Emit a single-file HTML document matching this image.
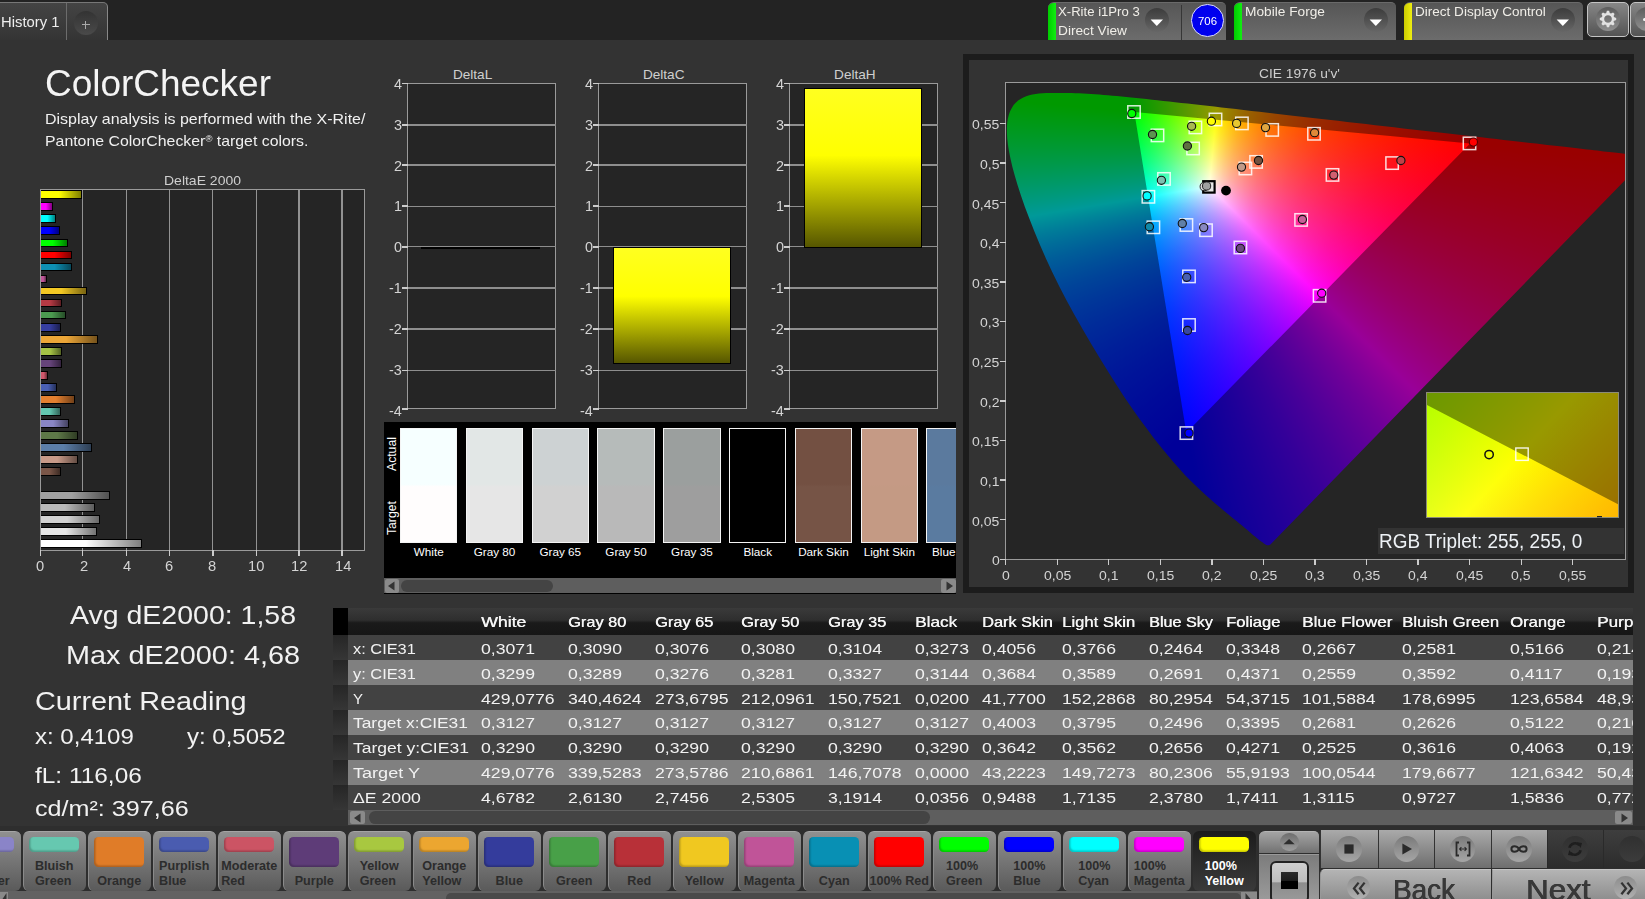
<!DOCTYPE html>
<html><head><meta charset="utf-8"><title>ColorChecker</title>
<style>
html,body{margin:0;padding:0;background:#333;}
body{width:1645px;height:899px;position:relative;overflow:hidden;font-family:"Liberation Sans",sans-serif;}
div{box-sizing:border-box;}
</style></head><body>
<div style="position:absolute;left:0.00px;top:0.00px;width:1645.00px;height:40.00px;background:#232323;"></div>
<div style="position:absolute;left:0.00px;top:2.00px;width:108.00px;height:38.00px;background:linear-gradient(#444,#343434);border-top:1px solid #777;border-right:1px solid #888;border-top-right-radius:5px;"></div>
<div style="position:absolute;left:66.00px;top:3.00px;width:1.00px;height:37.00px;background:#6c6c6c;"></div>
<div style="position:absolute;left:0.60px;top:14.00px;font-size:13.90px;line-height:16px;color:#eee;white-space:nowrap;transform:scaleX(1.0668);transform-origin:0 0;">History 1</div>
<div style="position:absolute;left:73.50px;top:10.70px;width:24.00px;height:24.00px;border-radius:50%;background:linear-gradient(#333,#4a4a4a);"></div>
<div style="position:absolute;left:81.70px;top:24.20px;width:8.00px;height:1.00px;background:#aaa;"></div>
<div style="position:absolute;left:85.20px;top:20.70px;width:1.00px;height:8.00px;background:#aaa;"></div>
<div style="position:absolute;left:1047.50px;top:2.00px;width:178.50px;height:37.50px;background:linear-gradient(#565656,#6c6c6c);border-top:1px solid #6a6a6a;border-radius:6px 5px 0 0;overflow:hidden;"><div style="position:absolute;left:0;top:-1px;width:8px;height:39px;background:linear-gradient(90deg,#0c0,#1e1)"></div></div>
<div style="position:absolute;left:1145.20px;top:8.40px;width:24.00px;height:24.00px;border-radius:50%;background:linear-gradient(#3c3c3c,#666);"></div>
<svg style="position:absolute;left:1150.4px;top:18.8px" width="14" height="8"><path d="M0.6 0.6H13L6.8 7z" fill="#fff"/></svg>
<div style="position:absolute;left:1058.30px;top:4.00px;font-size:13.20px;line-height:15px;color:#f0eee8;white-space:nowrap;transform:scaleX(0.9956);transform-origin:0 0;">X-Rite i1Pro 3</div>
<div style="position:absolute;left:1058.30px;top:23.00px;font-size:13.20px;line-height:15px;color:#f0eee8;white-space:nowrap;transform:scaleX(1.0375);transform-origin:0 0;">Direct View</div>
<div style="position:absolute;left:1181.00px;top:5.00px;width:1.30px;height:34.50px;background:#363636;"></div>
<div style="position:absolute;left:1191.00px;top:4.20px;width:32.60px;height:32.60px;border-radius:50%;background:#0000ee;border:1.5px solid #dcdcff;"></div>
<div style="position:absolute;left:1197.90px;top:14.00px;font-size:11.80px;line-height:14px;color:#fff;white-space:nowrap;transform:scaleX(0.9652);transform-origin:0 0;">706</div>
<div style="position:absolute;left:1234.00px;top:2.00px;width:162.00px;height:37.50px;background:linear-gradient(#565656,#6c6c6c);border-top:1px solid #6a6a6a;border-radius:6px 5px 0 0;overflow:hidden;"><div style="position:absolute;left:0;top:-1px;width:8px;height:39px;background:linear-gradient(90deg,#0c0,#1e1)"></div></div>
<div style="position:absolute;left:1363.80px;top:8.40px;width:24.00px;height:24.00px;border-radius:50%;background:linear-gradient(#3c3c3c,#666);"></div>
<svg style="position:absolute;left:1369.0px;top:18.8px" width="14" height="8"><path d="M0.6 0.6H13L6.8 7z" fill="#fff"/></svg>
<div style="position:absolute;left:1244.80px;top:4.00px;font-size:13.20px;line-height:15px;color:#f0eee8;white-space:nowrap;transform:scaleX(1.0386);transform-origin:0 0;">Mobile Forge</div>
<div style="position:absolute;left:1404.40px;top:2.00px;width:178.60px;height:37.50px;background:linear-gradient(#565656,#6c6c6c);border-top:1px solid #6a6a6a;border-radius:6px 5px 0 0;overflow:hidden;"><div style="position:absolute;left:0;top:-1px;width:8px;height:39px;background:linear-gradient(90deg,#cc0,#ee1)"></div></div>
<div style="position:absolute;left:1551.00px;top:8.40px;width:24.00px;height:24.00px;border-radius:50%;background:linear-gradient(#3c3c3c,#666);"></div>
<svg style="position:absolute;left:1556.2px;top:18.8px" width="14" height="8"><path d="M0.6 0.6H13L6.8 7z" fill="#fff"/></svg>
<div style="position:absolute;left:1415.20px;top:4.00px;font-size:13.20px;line-height:15px;color:#f0eee8;white-space:nowrap;transform:scaleX(1.0264);transform-origin:0 0;">Direct Display Control</div>
<div style="position:absolute;left:1587.00px;top:1.80px;width:42.20px;height:35.20px;border:1.3px solid #c4c4c4;border-radius:5px;background:linear-gradient(#868686,#545454);"></div>
<div style="position:absolute;left:1595.90px;top:7.30px;width:24.20px;height:24.20px;border-radius:50%;background:linear-gradient(#5c5c5c,#909090);"></div>
<svg style="position:absolute;left:1598px;top:9.4px" width="20" height="20" viewBox="-10 -10 20 20"><g fill="#e2e2e2"><path d="M-1.9 -5.6L-1.1 -8.2H1.1L1.9 -5.6z" transform="rotate(0)"/><path d="M-1.9 -5.6L-1.1 -8.2H1.1L1.9 -5.6z" transform="rotate(45)"/><path d="M-1.9 -5.6L-1.1 -8.2H1.1L1.9 -5.6z" transform="rotate(90)"/><path d="M-1.9 -5.6L-1.1 -8.2H1.1L1.9 -5.6z" transform="rotate(135)"/><path d="M-1.9 -5.6L-1.1 -8.2H1.1L1.9 -5.6z" transform="rotate(180)"/><path d="M-1.9 -5.6L-1.1 -8.2H1.1L1.9 -5.6z" transform="rotate(225)"/><path d="M-1.9 -5.6L-1.1 -8.2H1.1L1.9 -5.6z" transform="rotate(270)"/><path d="M-1.9 -5.6L-1.1 -8.2H1.1L1.9 -5.6z" transform="rotate(315)"/></g><circle r="5.05" fill="none" stroke="#e2e2e2" stroke-width="2.4"/></svg>
<div style="position:absolute;left:1630.20px;top:1.80px;width:30.00px;height:35.20px;border:1.3px solid #c4c4c4;border-radius:5px;background:linear-gradient(#868686,#545454);"></div>
<div style="position:absolute;left:1634.50px;top:7.30px;width:24.20px;height:24.20px;border-radius:50%;background:linear-gradient(#5c5c5c,#909090);"></div>
<div style="position:absolute;left:1643.00px;top:17.50px;width:3.00px;height:3.60px;background:#f4f4f4;border-radius:1.5px 0 0 1.5px;"></div>
<div style="position:absolute;left:44.90px;top:63.00px;font-size:36.20px;line-height:41px;color:#f4f4f4;white-space:nowrap;transform:scaleX(1.0213);transform-origin:0 0;">ColorChecker</div>
<div style="position:absolute;left:44.50px;top:110.00px;font-size:15.00px;line-height:17px;color:#f0f0f0;white-space:nowrap;transform:scaleX(1.0647);transform-origin:0 0;">Display analysis is performed with the X-Rite/</div>
<div style="position:absolute;left:44.50px;top:132.00px;font-size:15.00px;line-height:17px;color:#f0f0f0;white-space:nowrap;transform:scaleX(1.0568);transform-origin:0 0;">Pantone ColorChecker<span style="font-size:9px;position:relative;top:-4.5px">&#174;</span> target colors.</div>
<div style="position:absolute;left:164.40px;top:173.00px;font-size:13.60px;line-height:15px;color:#cfcfcf;white-space:nowrap;transform:scaleX(1.0287);transform-origin:0 0;">DeltaE 2000</div>
<div style="position:absolute;left:40.00px;top:189.10px;width:325.00px;height:361.70px;background:#252525;border:1px solid #9a9a9a;"></div>
<div style="position:absolute;left:81.80px;top:189.60px;width:1.20px;height:360.70px;background:#929292;"></div>
<div style="position:absolute;left:125.70px;top:189.60px;width:1.20px;height:360.70px;background:#929292;"></div>
<div style="position:absolute;left:168.80px;top:189.60px;width:1.20px;height:360.70px;background:#929292;"></div>
<div style="position:absolute;left:212.30px;top:189.60px;width:1.20px;height:360.70px;background:#929292;"></div>
<div style="position:absolute;left:255.60px;top:189.60px;width:1.20px;height:360.70px;background:#929292;"></div>
<div style="position:absolute;left:298.40px;top:189.60px;width:1.20px;height:360.70px;background:#929292;"></div>
<div style="position:absolute;left:341.40px;top:189.60px;width:1.20px;height:360.70px;background:#929292;"></div>
<div style="position:absolute;left:39.90px;top:550.30px;width:1.40px;height:5.60px;background:#ccc;"></div>
<div style="position:absolute;left:36.11px;top:558.00px;font-size:14.00px;line-height:16px;color:#d4d4d4;white-space:nowrap;transform:scaleX(1.0500);transform-origin:0 0;">0</div>
<div style="position:absolute;left:81.70px;top:550.30px;width:1.40px;height:5.60px;background:#ccc;"></div>
<div style="position:absolute;left:79.51px;top:558.00px;font-size:14.00px;line-height:16px;color:#d4d4d4;white-space:nowrap;transform:scaleX(1.0500);transform-origin:0 0;">2</div>
<div style="position:absolute;left:125.60px;top:550.30px;width:1.40px;height:5.60px;background:#ccc;"></div>
<div style="position:absolute;left:122.91px;top:558.00px;font-size:14.00px;line-height:16px;color:#d4d4d4;white-space:nowrap;transform:scaleX(1.0500);transform-origin:0 0;">4</div>
<div style="position:absolute;left:168.70px;top:550.30px;width:1.40px;height:5.60px;background:#ccc;"></div>
<div style="position:absolute;left:165.21px;top:558.00px;font-size:14.00px;line-height:16px;color:#d4d4d4;white-space:nowrap;transform:scaleX(1.0500);transform-origin:0 0;">6</div>
<div style="position:absolute;left:212.20px;top:550.30px;width:1.40px;height:5.60px;background:#ccc;"></div>
<div style="position:absolute;left:208.31px;top:558.00px;font-size:14.00px;line-height:16px;color:#d4d4d4;white-space:nowrap;transform:scaleX(1.0500);transform-origin:0 0;">8</div>
<div style="position:absolute;left:255.50px;top:550.30px;width:1.40px;height:5.60px;background:#ccc;"></div>
<div style="position:absolute;left:248.03px;top:558.00px;font-size:14.00px;line-height:16px;color:#d4d4d4;white-space:nowrap;transform:scaleX(1.0500);transform-origin:0 0;">10</div>
<div style="position:absolute;left:298.30px;top:550.30px;width:1.40px;height:5.60px;background:#ccc;"></div>
<div style="position:absolute;left:291.33px;top:558.00px;font-size:14.00px;line-height:16px;color:#d4d4d4;white-space:nowrap;transform:scaleX(1.0500);transform-origin:0 0;">12</div>
<div style="position:absolute;left:341.30px;top:550.30px;width:1.40px;height:5.60px;background:#ccc;"></div>
<div style="position:absolute;left:334.73px;top:558.00px;font-size:14.00px;line-height:16px;color:#d4d4d4;white-space:nowrap;transform:scaleX(1.0500);transform-origin:0 0;">14</div>
<div style="position:absolute;left:40.50px;top:190.40px;width:41.30px;height:8.80px;background:linear-gradient(90deg,#ffff00 0%,#ffff00 45%,#7f7f00 100%);border:1.4px solid #000;border-left:none;"></div>
<div style="position:absolute;left:40.50px;top:202.43px;width:12.20px;height:8.80px;background:linear-gradient(90deg,#ff00ff 0%,#ff00ff 45%,#7f007f 100%);border:1.4px solid #000;border-left:none;"></div>
<div style="position:absolute;left:40.50px;top:214.46px;width:15.10px;height:8.80px;background:linear-gradient(90deg,#00ffff 0%,#00ffff 45%,#007f7f 100%);border:1.4px solid #000;border-left:none;"></div>
<div style="position:absolute;left:40.50px;top:226.49px;width:19.30px;height:8.80px;background:linear-gradient(90deg,#0000ff 0%,#0000ff 45%,#00007f 100%);border:1.4px solid #000;border-left:none;"></div>
<div style="position:absolute;left:40.50px;top:238.52px;width:27.10px;height:8.80px;background:linear-gradient(90deg,#00ff00 0%,#00ff00 45%,#007f00 100%);border:1.4px solid #000;border-left:none;"></div>
<div style="position:absolute;left:40.50px;top:250.55px;width:31.30px;height:8.80px;background:linear-gradient(90deg,#ff0000 0%,#ff0000 45%,#7f0000 100%);border:1.4px solid #000;border-left:none;"></div>
<div style="position:absolute;left:40.50px;top:262.58px;width:31.30px;height:8.80px;background:linear-gradient(90deg,#0e90b4 0%,#0e90b4 45%,#07485a 100%);border:1.4px solid #000;border-left:none;"></div>
<div style="position:absolute;left:40.50px;top:274.61px;width:6.40px;height:8.80px;background:linear-gradient(90deg,#c0579a 0%,#c0579a 45%,#602b4d 100%);border:1.4px solid #000;border-left:none;"></div>
<div style="position:absolute;left:40.50px;top:286.64px;width:46.40px;height:8.80px;background:linear-gradient(90deg,#f2c824 0%,#f2c824 45%,#796412 100%);border:1.4px solid #000;border-left:none;"></div>
<div style="position:absolute;left:40.50px;top:298.67px;width:21.50px;height:8.80px;background:linear-gradient(90deg,#b63a44 0%,#b63a44 45%,#5b1d22 100%);border:1.4px solid #000;border-left:none;"></div>
<div style="position:absolute;left:40.50px;top:310.70px;width:25.30px;height:8.80px;background:linear-gradient(90deg,#4c9a50 0%,#4c9a50 45%,#264d28 100%);border:1.4px solid #000;border-left:none;"></div>
<div style="position:absolute;left:40.50px;top:322.73px;width:20.40px;height:8.80px;background:linear-gradient(90deg,#363ea0 0%,#363ea0 45%,#1b1f50 100%);border:1.4px solid #000;border-left:none;"></div>
<div style="position:absolute;left:40.50px;top:334.76px;width:57.10px;height:8.80px;background:linear-gradient(90deg,#eca638 0%,#eca638 45%,#76531c 100%);border:1.4px solid #000;border-left:none;"></div>
<div style="position:absolute;left:40.50px;top:346.79px;width:21.30px;height:8.80px;background:linear-gradient(90deg,#a6c446 0%,#a6c446 45%,#536223 100%);border:1.4px solid #000;border-left:none;"></div>
<div style="position:absolute;left:40.50px;top:358.82px;width:21.30px;height:8.80px;background:linear-gradient(90deg,#66447a 0%,#66447a 45%,#33223d 100%);border:1.4px solid #000;border-left:none;"></div>
<div style="position:absolute;left:40.50px;top:370.85px;width:7.30px;height:8.80px;background:linear-gradient(90deg,#d0586c 0%,#d0586c 45%,#682c36 100%);border:1.4px solid #000;border-left:none;"></div>
<div style="position:absolute;left:40.50px;top:382.88px;width:16.00px;height:8.80px;background:linear-gradient(90deg,#4a60b4 0%,#4a60b4 45%,#25305a 100%);border:1.4px solid #000;border-left:none;"></div>
<div style="position:absolute;left:40.50px;top:394.91px;width:34.00px;height:8.80px;background:linear-gradient(90deg,#e48030 0%,#e48030 45%,#724018 100%);border:1.4px solid #000;border-left:none;"></div>
<div style="position:absolute;left:40.50px;top:406.94px;width:20.70px;height:8.80px;background:linear-gradient(90deg,#64c8b2 0%,#64c8b2 45%,#326459 100%);border:1.4px solid #000;border-left:none;"></div>
<div style="position:absolute;left:40.50px;top:418.97px;width:28.60px;height:8.80px;background:linear-gradient(90deg,#8a86c4 0%,#8a86c4 45%,#454362 100%);border:1.4px solid #000;border-left:none;"></div>
<div style="position:absolute;left:40.50px;top:431.00px;width:37.70px;height:8.80px;background:linear-gradient(90deg,#5e7848 0%,#5e7848 45%,#2f3c24 100%);border:1.4px solid #000;border-left:none;"></div>
<div style="position:absolute;left:40.50px;top:443.03px;width:51.70px;height:8.80px;background:linear-gradient(90deg,#5c7ea8 0%,#5c7ea8 45%,#2e3f54 100%);border:1.4px solid #000;border-left:none;"></div>
<div style="position:absolute;left:40.50px;top:455.06px;width:37.70px;height:8.80px;background:linear-gradient(90deg,#c89a88 0%,#c89a88 45%,#644d44 100%);border:1.4px solid #000;border-left:none;"></div>
<div style="position:absolute;left:40.50px;top:467.09px;width:20.70px;height:8.80px;background:linear-gradient(90deg,#7a5648 0%,#7a5648 45%,#3d2b24 100%);border:1.4px solid #000;border-left:none;"></div>
<div style="position:absolute;left:40.50px;top:491.15px;width:69.20px;height:8.80px;background:linear-gradient(90deg,#a0a0a0 0%,#a0a0a0 45%,#505050 100%);border:1.4px solid #000;border-left:none;"></div>
<div style="position:absolute;left:40.50px;top:503.18px;width:54.90px;height:8.80px;background:linear-gradient(90deg,#bababa 0%,#bababa 45%,#5d5d5d 100%);border:1.4px solid #000;border-left:none;"></div>
<div style="position:absolute;left:40.50px;top:515.21px;width:59.50px;height:8.80px;background:linear-gradient(90deg,#d2d2d2 0%,#d2d2d2 45%,#696969 100%);border:1.4px solid #000;border-left:none;"></div>
<div style="position:absolute;left:40.50px;top:527.24px;width:56.60px;height:8.80px;background:linear-gradient(90deg,#e6e6e6 0%,#e6e6e6 45%,#737373 100%);border:1.4px solid #000;border-left:none;"></div>
<div style="position:absolute;left:40.50px;top:539.27px;width:101.20px;height:8.80px;background:linear-gradient(90deg,#ffffff 0%,#ffffff 45%,#7f7f7f 100%);border:1.4px solid #000;border-left:none;"></div>
<div style="position:absolute;left:69.60px;top:600.00px;font-size:26.50px;line-height:30px;color:#f2f2f2;white-space:nowrap;transform:scaleX(1.0752);transform-origin:0 0;">Avg dE2000: 1,58</div>
<div style="position:absolute;left:66.00px;top:640.00px;font-size:26.50px;line-height:30px;color:#f2f2f2;white-space:nowrap;transform:scaleX(1.0880);transform-origin:0 0;">Max dE2000: 4,68</div>
<div style="position:absolute;left:35.00px;top:686.00px;font-size:26.50px;line-height:30px;color:#f2f2f2;white-space:nowrap;transform:scaleX(1.0878);transform-origin:0 0;">Current Reading</div>
<div style="position:absolute;left:35.00px;top:724.00px;font-size:22.30px;line-height:25px;color:#f2f2f2;white-space:nowrap;transform:scaleX(1.0770);transform-origin:0 0;">x: 0,4109</div>
<div style="position:absolute;left:186.60px;top:724.00px;font-size:22.30px;line-height:25px;color:#f2f2f2;white-space:nowrap;transform:scaleX(1.0759);transform-origin:0 0;">y: 0,5052</div>
<div style="position:absolute;left:35.00px;top:763.00px;font-size:22.30px;line-height:25px;color:#f2f2f2;white-space:nowrap;transform:scaleX(1.0950);transform-origin:0 0;">fL: 116,06</div>
<div style="position:absolute;left:35.00px;top:796.00px;font-size:22.30px;line-height:25px;color:#f2f2f2;white-space:nowrap;transform:scaleX(1.1272);transform-origin:0 0;">cd/m&#178;: 397,66</div>
<div style="position:absolute;left:407.00px;top:83.10px;width:149.20px;height:326.30px;background:#252525;border:1px solid #9a9a9a;"></div>
<div style="position:absolute;left:402.00px;top:82.90px;width:5.50px;height:1.50px;background:#ccc;"></div>
<div style="position:absolute;left:393.78px;top:75.90px;font-size:14.00px;line-height:16px;color:#d4d4d4;white-space:nowrap;transform:scaleX(1.0300);transform-origin:0 0;">4</div>
<div style="position:absolute;left:407.50px;top:124.30px;width:148.20px;height:1.30px;background:#8e8e8e;"></div>
<div style="position:absolute;left:402.00px;top:124.20px;width:5.50px;height:1.50px;background:#ccc;"></div>
<div style="position:absolute;left:393.78px;top:116.80px;font-size:14.00px;line-height:16px;color:#d4d4d4;white-space:nowrap;transform:scaleX(1.0300);transform-origin:0 0;">3</div>
<div style="position:absolute;left:407.50px;top:164.40px;width:148.20px;height:1.30px;background:#8e8e8e;"></div>
<div style="position:absolute;left:402.00px;top:164.30px;width:5.50px;height:1.50px;background:#ccc;"></div>
<div style="position:absolute;left:393.78px;top:157.50px;font-size:14.00px;line-height:16px;color:#d4d4d4;white-space:nowrap;transform:scaleX(1.0300);transform-origin:0 0;">2</div>
<div style="position:absolute;left:407.50px;top:205.50px;width:148.20px;height:1.30px;background:#8e8e8e;"></div>
<div style="position:absolute;left:402.00px;top:205.40px;width:5.50px;height:1.50px;background:#ccc;"></div>
<div style="position:absolute;left:393.78px;top:198.30px;font-size:14.00px;line-height:16px;color:#d4d4d4;white-space:nowrap;transform:scaleX(1.0300);transform-origin:0 0;">1</div>
<div style="position:absolute;left:407.50px;top:246.20px;width:148.20px;height:1.30px;background:#8e8e8e;"></div>
<div style="position:absolute;left:402.00px;top:246.10px;width:5.50px;height:1.50px;background:#ccc;"></div>
<div style="position:absolute;left:393.78px;top:239.00px;font-size:14.00px;line-height:16px;color:#d4d4d4;white-space:nowrap;transform:scaleX(1.0300);transform-origin:0 0;">0</div>
<div style="position:absolute;left:407.50px;top:287.40px;width:148.20px;height:1.30px;background:#8e8e8e;"></div>
<div style="position:absolute;left:402.00px;top:287.30px;width:5.50px;height:1.50px;background:#ccc;"></div>
<div style="position:absolute;left:388.98px;top:280.20px;font-size:14.00px;line-height:16px;color:#d4d4d4;white-space:nowrap;transform:scaleX(1.0300);transform-origin:0 0;">-1</div>
<div style="position:absolute;left:407.50px;top:328.40px;width:148.20px;height:1.30px;background:#8e8e8e;"></div>
<div style="position:absolute;left:402.00px;top:328.30px;width:5.50px;height:1.50px;background:#ccc;"></div>
<div style="position:absolute;left:388.98px;top:321.20px;font-size:14.00px;line-height:16px;color:#d4d4d4;white-space:nowrap;transform:scaleX(1.0300);transform-origin:0 0;">-2</div>
<div style="position:absolute;left:407.50px;top:369.60px;width:148.20px;height:1.30px;background:#8e8e8e;"></div>
<div style="position:absolute;left:402.00px;top:369.50px;width:5.50px;height:1.50px;background:#ccc;"></div>
<div style="position:absolute;left:388.98px;top:362.40px;font-size:14.00px;line-height:16px;color:#d4d4d4;white-space:nowrap;transform:scaleX(1.0300);transform-origin:0 0;">-3</div>
<div style="position:absolute;left:402.00px;top:408.20px;width:5.50px;height:1.50px;background:#ccc;"></div>
<div style="position:absolute;left:388.98px;top:403.00px;font-size:14.00px;line-height:16px;color:#d4d4d4;white-space:nowrap;transform:scaleX(1.0300);transform-origin:0 0;">-4</div>
<div style="position:absolute;left:452.94px;top:67.00px;font-size:13.60px;line-height:15px;color:#cfcfcf;white-space:nowrap;">DeltaL</div>
<div style="position:absolute;left:421.20px;top:246.70px;width:118.90px;height:2.20px;background:#000;"></div>
<div style="position:absolute;left:598.30px;top:83.10px;width:148.80px;height:326.30px;background:#252525;border:1px solid #9a9a9a;"></div>
<div style="position:absolute;left:593.30px;top:82.90px;width:5.50px;height:1.50px;background:#ccc;"></div>
<div style="position:absolute;left:585.08px;top:75.90px;font-size:14.00px;line-height:16px;color:#d4d4d4;white-space:nowrap;transform:scaleX(1.0300);transform-origin:0 0;">4</div>
<div style="position:absolute;left:598.80px;top:124.30px;width:147.80px;height:1.30px;background:#8e8e8e;"></div>
<div style="position:absolute;left:593.30px;top:124.20px;width:5.50px;height:1.50px;background:#ccc;"></div>
<div style="position:absolute;left:585.08px;top:116.80px;font-size:14.00px;line-height:16px;color:#d4d4d4;white-space:nowrap;transform:scaleX(1.0300);transform-origin:0 0;">3</div>
<div style="position:absolute;left:598.80px;top:164.40px;width:147.80px;height:1.30px;background:#8e8e8e;"></div>
<div style="position:absolute;left:593.30px;top:164.30px;width:5.50px;height:1.50px;background:#ccc;"></div>
<div style="position:absolute;left:585.08px;top:157.50px;font-size:14.00px;line-height:16px;color:#d4d4d4;white-space:nowrap;transform:scaleX(1.0300);transform-origin:0 0;">2</div>
<div style="position:absolute;left:598.80px;top:205.50px;width:147.80px;height:1.30px;background:#8e8e8e;"></div>
<div style="position:absolute;left:593.30px;top:205.40px;width:5.50px;height:1.50px;background:#ccc;"></div>
<div style="position:absolute;left:585.08px;top:198.30px;font-size:14.00px;line-height:16px;color:#d4d4d4;white-space:nowrap;transform:scaleX(1.0300);transform-origin:0 0;">1</div>
<div style="position:absolute;left:598.80px;top:246.20px;width:147.80px;height:1.30px;background:#8e8e8e;"></div>
<div style="position:absolute;left:593.30px;top:246.10px;width:5.50px;height:1.50px;background:#ccc;"></div>
<div style="position:absolute;left:585.08px;top:239.00px;font-size:14.00px;line-height:16px;color:#d4d4d4;white-space:nowrap;transform:scaleX(1.0300);transform-origin:0 0;">0</div>
<div style="position:absolute;left:598.80px;top:287.40px;width:147.80px;height:1.30px;background:#8e8e8e;"></div>
<div style="position:absolute;left:593.30px;top:287.30px;width:5.50px;height:1.50px;background:#ccc;"></div>
<div style="position:absolute;left:580.28px;top:280.20px;font-size:14.00px;line-height:16px;color:#d4d4d4;white-space:nowrap;transform:scaleX(1.0300);transform-origin:0 0;">-1</div>
<div style="position:absolute;left:598.80px;top:328.40px;width:147.80px;height:1.30px;background:#8e8e8e;"></div>
<div style="position:absolute;left:593.30px;top:328.30px;width:5.50px;height:1.50px;background:#ccc;"></div>
<div style="position:absolute;left:580.28px;top:321.20px;font-size:14.00px;line-height:16px;color:#d4d4d4;white-space:nowrap;transform:scaleX(1.0300);transform-origin:0 0;">-2</div>
<div style="position:absolute;left:598.80px;top:369.60px;width:147.80px;height:1.30px;background:#8e8e8e;"></div>
<div style="position:absolute;left:593.30px;top:369.50px;width:5.50px;height:1.50px;background:#ccc;"></div>
<div style="position:absolute;left:580.28px;top:362.40px;font-size:14.00px;line-height:16px;color:#d4d4d4;white-space:nowrap;transform:scaleX(1.0300);transform-origin:0 0;">-3</div>
<div style="position:absolute;left:593.30px;top:408.20px;width:5.50px;height:1.50px;background:#ccc;"></div>
<div style="position:absolute;left:580.28px;top:403.00px;font-size:14.00px;line-height:16px;color:#d4d4d4;white-space:nowrap;transform:scaleX(1.0300);transform-origin:0 0;">-4</div>
<div style="position:absolute;left:642.92px;top:67.00px;font-size:13.60px;line-height:15px;color:#cfcfcf;white-space:nowrap;">DeltaC</div>
<div style="position:absolute;left:612.60px;top:247.20px;width:118.40px;height:116.60px;background:linear-gradient(#ffff20 0%,#ffff00 42%,#565600 100%);border:1.2px solid #000;"></div>
<div style="position:absolute;left:789.30px;top:83.10px;width:149.20px;height:326.30px;background:#252525;border:1px solid #9a9a9a;"></div>
<div style="position:absolute;left:784.30px;top:82.90px;width:5.50px;height:1.50px;background:#ccc;"></div>
<div style="position:absolute;left:776.08px;top:75.90px;font-size:14.00px;line-height:16px;color:#d4d4d4;white-space:nowrap;transform:scaleX(1.0300);transform-origin:0 0;">4</div>
<div style="position:absolute;left:789.80px;top:124.30px;width:148.20px;height:1.30px;background:#8e8e8e;"></div>
<div style="position:absolute;left:784.30px;top:124.20px;width:5.50px;height:1.50px;background:#ccc;"></div>
<div style="position:absolute;left:776.08px;top:116.80px;font-size:14.00px;line-height:16px;color:#d4d4d4;white-space:nowrap;transform:scaleX(1.0300);transform-origin:0 0;">3</div>
<div style="position:absolute;left:789.80px;top:164.40px;width:148.20px;height:1.30px;background:#8e8e8e;"></div>
<div style="position:absolute;left:784.30px;top:164.30px;width:5.50px;height:1.50px;background:#ccc;"></div>
<div style="position:absolute;left:776.08px;top:157.50px;font-size:14.00px;line-height:16px;color:#d4d4d4;white-space:nowrap;transform:scaleX(1.0300);transform-origin:0 0;">2</div>
<div style="position:absolute;left:789.80px;top:205.50px;width:148.20px;height:1.30px;background:#8e8e8e;"></div>
<div style="position:absolute;left:784.30px;top:205.40px;width:5.50px;height:1.50px;background:#ccc;"></div>
<div style="position:absolute;left:776.08px;top:198.30px;font-size:14.00px;line-height:16px;color:#d4d4d4;white-space:nowrap;transform:scaleX(1.0300);transform-origin:0 0;">1</div>
<div style="position:absolute;left:789.80px;top:246.20px;width:148.20px;height:1.30px;background:#8e8e8e;"></div>
<div style="position:absolute;left:784.30px;top:246.10px;width:5.50px;height:1.50px;background:#ccc;"></div>
<div style="position:absolute;left:776.08px;top:239.00px;font-size:14.00px;line-height:16px;color:#d4d4d4;white-space:nowrap;transform:scaleX(1.0300);transform-origin:0 0;">0</div>
<div style="position:absolute;left:789.80px;top:287.40px;width:148.20px;height:1.30px;background:#8e8e8e;"></div>
<div style="position:absolute;left:784.30px;top:287.30px;width:5.50px;height:1.50px;background:#ccc;"></div>
<div style="position:absolute;left:771.28px;top:280.20px;font-size:14.00px;line-height:16px;color:#d4d4d4;white-space:nowrap;transform:scaleX(1.0300);transform-origin:0 0;">-1</div>
<div style="position:absolute;left:789.80px;top:328.40px;width:148.20px;height:1.30px;background:#8e8e8e;"></div>
<div style="position:absolute;left:784.30px;top:328.30px;width:5.50px;height:1.50px;background:#ccc;"></div>
<div style="position:absolute;left:771.28px;top:321.20px;font-size:14.00px;line-height:16px;color:#d4d4d4;white-space:nowrap;transform:scaleX(1.0300);transform-origin:0 0;">-2</div>
<div style="position:absolute;left:789.80px;top:369.60px;width:148.20px;height:1.30px;background:#8e8e8e;"></div>
<div style="position:absolute;left:784.30px;top:369.50px;width:5.50px;height:1.50px;background:#ccc;"></div>
<div style="position:absolute;left:771.28px;top:362.40px;font-size:14.00px;line-height:16px;color:#d4d4d4;white-space:nowrap;transform:scaleX(1.0300);transform-origin:0 0;">-3</div>
<div style="position:absolute;left:784.30px;top:408.20px;width:5.50px;height:1.50px;background:#ccc;"></div>
<div style="position:absolute;left:771.28px;top:403.00px;font-size:14.00px;line-height:16px;color:#d4d4d4;white-space:nowrap;transform:scaleX(1.0300);transform-origin:0 0;">-4</div>
<div style="position:absolute;left:834.12px;top:67.00px;font-size:13.60px;line-height:15px;color:#cfcfcf;white-space:nowrap;">DeltaH</div>
<div style="position:absolute;left:803.60px;top:87.70px;width:118.40px;height:160.10px;background:linear-gradient(#ffff20 0%,#ffff00 42%,#565600 100%);border:1.2px solid #000;"></div>
<div style="position:absolute;left:384.00px;top:422.20px;width:572.00px;height:171.40px;background:#000;"></div>
<div style="position:absolute;left:384.00px;top:422.60px;width:572.00px;height:156.00px;overflow:hidden;"><div style="position:absolute;left:16.0px;top:5.8px;width:57.4px;height:114.4px;border:1px solid #f4f4f4;background:linear-gradient(#f6ffff 0%,#f6ffff 49%,#fffdfd 51%,#fffdfd 100%)"></div><div style="position:absolute;left:16.0px;top:122.8px;width:97.4px;margin-left:-20px;text-align:center;font-size:11.7px;line-height:13px;color:#fff;white-space:nowrap">White</div><div style="position:absolute;left:81.8px;top:5.8px;width:57.4px;height:114.4px;border:1px solid #f4f4f4;background:linear-gradient(#e2e7e6 0%,#e2e7e6 49%,#e6e6e6 51%,#e6e6e6 100%)"></div><div style="position:absolute;left:81.8px;top:122.8px;width:97.4px;margin-left:-20px;text-align:center;font-size:11.7px;line-height:13px;color:#fff;white-space:nowrap">Gray 80</div><div style="position:absolute;left:147.6px;top:5.8px;width:57.4px;height:114.4px;border:1px solid #f4f4f4;background:linear-gradient(#cdd2d3 0%,#cdd2d3 49%,#d1d1d1 51%,#d1d1d1 100%)"></div><div style="position:absolute;left:147.6px;top:122.8px;width:97.4px;margin-left:-20px;text-align:center;font-size:11.7px;line-height:13px;color:#fff;white-space:nowrap">Gray 65</div><div style="position:absolute;left:213.4px;top:5.8px;width:57.4px;height:114.4px;border:1px solid #f4f4f4;background:linear-gradient(#b6bbba 0%,#b6bbba 49%,#b9b9b9 51%,#b9b9b9 100%)"></div><div style="position:absolute;left:213.4px;top:122.8px;width:97.4px;margin-left:-20px;text-align:center;font-size:11.7px;line-height:13px;color:#fff;white-space:nowrap">Gray 50</div><div style="position:absolute;left:279.2px;top:5.8px;width:57.4px;height:114.4px;border:1px solid #f4f4f4;background:linear-gradient(#9b9f9e 0%,#9b9f9e 49%,#9e9e9e 51%,#9e9e9e 100%)"></div><div style="position:absolute;left:279.2px;top:122.8px;width:97.4px;margin-left:-20px;text-align:center;font-size:11.7px;line-height:13px;color:#fff;white-space:nowrap">Gray 35</div><div style="position:absolute;left:345.0px;top:5.8px;width:57.4px;height:114.4px;border:1px solid #f4f4f4;background:linear-gradient(#000 0%,#000 49%,#000 51%,#000 100%)"></div><div style="position:absolute;left:345.0px;top:122.8px;width:97.4px;margin-left:-20px;text-align:center;font-size:11.7px;line-height:13px;color:#fff;white-space:nowrap">Black</div><div style="position:absolute;left:410.8px;top:5.8px;width:57.4px;height:114.4px;border:1px solid #f4f4f4;background:linear-gradient(#735042 0%,#735042 49%,#765446 51%,#765446 100%)"></div><div style="position:absolute;left:410.8px;top:122.8px;width:97.4px;margin-left:-20px;text-align:center;font-size:11.7px;line-height:13px;color:#fff;white-space:nowrap">Dark Skin</div><div style="position:absolute;left:476.6px;top:5.8px;width:57.4px;height:114.4px;border:1px solid #f4f4f4;background:linear-gradient(#c59a85 0%,#c59a85 49%,#c49a84 51%,#c49a84 100%)"></div><div style="position:absolute;left:476.6px;top:122.8px;width:97.4px;margin-left:-20px;text-align:center;font-size:11.7px;line-height:13px;color:#fff;white-space:nowrap">Light Skin</div><div style="position:absolute;left:542.4px;top:5.8px;width:57.4px;height:114.4px;border:1px solid #f4f4f4;background:linear-gradient(#5b7a9e 0%,#5b7a9e 49%,#5a7ba0 51%,#5a7ba0 100%)"></div><div style="position:absolute;left:542.4px;top:122.8px;width:97.4px;margin-left:-20px;text-align:center;font-size:11.7px;line-height:13px;color:#fff;white-space:nowrap">Blue Sky</div></div>
<div style="position:absolute;left:392.3px;top:470.5px;width:0;height:0"><div style="position:absolute;transform:rotate(-90deg);transform-origin:0 0;font-size:12.2px;line-height:14px;color:#fff;white-space:nowrap;left:-7px;top:0">Actual</div></div>
<div style="position:absolute;left:392.3px;top:534.5px;width:0;height:0"><div style="position:absolute;transform:rotate(-90deg);transform-origin:0 0;font-size:12.2px;line-height:14px;color:#fff;white-space:nowrap;left:-7px;top:0">Target</div></div>
<div style="position:absolute;left:384.00px;top:578.20px;width:572.00px;height:15.00px;background:#5e5e5e;"></div>
<div style="position:absolute;left:384.50px;top:579.00px;width:14.00px;height:13.50px;background:#8a8a8a;border-radius:2px;"></div>
<svg style="position:absolute;left:387px;top:581px" width="9" height="10"><path d="M7.5 0.5V9.5L1 5z" fill="#333"/></svg>
<div style="position:absolute;left:400.60px;top:579.60px;width:152.70px;height:12.60px;background:#444;border-radius:6.3px;"></div>
<div style="position:absolute;left:941.00px;top:579.00px;width:14.50px;height:13.50px;background:#8a8a8a;border-radius:2px;"></div>
<svg style="position:absolute;left:944.5px;top:581px" width="9" height="10"><path d="M1.5 0.5V9.5L8 5z" fill="#333"/></svg>
<div style="position:absolute;left:963.00px;top:54.00px;width:671.00px;height:539.00px;background:#333;border:6px solid #1c1c1c;"></div>
<div style="position:absolute;left:1005.00px;top:82.00px;width:621.00px;height:478.00px;border:1px solid #9a9a9a;background:#252525;"></div>
<div style="position:absolute;left:1258.50px;top:66.00px;font-size:13.60px;line-height:15px;color:#cfcfcf;white-space:nowrap;transform:scaleX(1.0120);transform-origin:0 0;">CIE 1976 u'v'</div>
<div style="position:absolute;left:1006.00px;top:83.00px;width:619.00px;height:476.00px;overflow:hidden;"><div style="position:absolute;left:0;top:0;width:100%;height:100%;clip-path:polygon(264.2px 461.7px,264.1px 461.6px,264.1px 461.6px,264.0px 461.6px,264.0px 461.7px,263.9px 461.7px,263.9px 461.8px,263.8px 461.9px,263.8px 461.9px,263.7px 461.9px,263.6px 461.9px,263.5px 461.9px,263.4px 461.9px,263.3px 462.0px,263.2px 462.0px,263.1px 462.1px,263.0px 462.2px,262.9px 462.2px,262.8px 462.2px,262.7px 462.2px,262.5px 462.2px,262.4px 462.2px,262.2px 462.2px,262.0px 462.2px,261.8px 462.2px,261.6px 462.2px,261.4px 462.2px,261.2px 462.2px,261.0px 462.2px,260.7px 462.1px,260.3px 461.9px,259.9px 461.7px,259.4px 461.4px,258.9px 461.1px,258.2px 460.7px,257.5px 460.2px,256.8px 459.6px,256.0px 459.1px,255.1px 458.4px,254.2px 457.7px,253.1px 456.9px,252.0px 456.0px,250.7px 455.0px,249.4px 453.8px,247.9px 452.7px,246.4px 451.4px,244.8px 450.0px,243.1px 448.6px,241.4px 447.1px,239.5px 445.5px,237.5px 443.8px,235.4px 442.1px,233.1px 440.2px,230.6px 438.1px,227.9px 436.0px,225.1px 433.7px,222.2px 431.3px,219.1px 428.8px,215.9px 426.1px,212.6px 423.3px,209.0px 420.3px,205.3px 417.0px,201.3px 413.5px,197.2px 409.7px,192.9px 405.8px,188.5px 401.6px,183.9px 397.0px,178.9px 391.9px,173.6px 386.1px,167.8px 379.5px,161.5px 372.1px,154.9px 364.0px,147.9px 355.2px,140.7px 345.6px,133.2px 335.4px,125.5px 324.5px,117.6px 312.9px,109.6px 300.5px,101.4px 287.5px,93.1px 274.0px,84.8px 260.2px,76.5px 246.1px,68.4px 231.8px,60.6px 217.5px,53.2px 203.3px,46.2px 189.1px,39.8px 175.2px,33.9px 161.7px,28.4px 148.6px,23.5px 136.1px,19.0px 124.2px,15.1px 113.0px,11.7px 102.5px,8.8px 92.8px,6.4px 83.9px,4.5px 75.7px,3.0px 68.2px,1.9px 61.4px,1.2px 55.2px,0.9px 49.6px,0.9px 44.4px,1.2px 39.7px,1.9px 35.4px,2.9px 31.5px,4.2px 28.0px,5.8px 24.9px,7.6px 22.1px,9.7px 19.7px,12.1px 17.6px,14.6px 15.9px,17.3px 14.4px,20.2px 13.2px,23.2px 12.3px,26.4px 11.6px,29.7px 11.0px,33.0px 10.6px,36.5px 10.3px,40.1px 10.1px,43.7px 10.0px,47.3px 9.9px,51.0px 9.9px,54.7px 9.9px,58.3px 9.9px,62.0px 9.9px,65.7px 10.0px,69.5px 10.2px,73.3px 10.3px,77.1px 10.5px,81.1px 10.8px,85.1px 11.0px,89.2px 11.3px,93.4px 11.6px,97.6px 11.9px,102.0px 12.3px,106.4px 12.7px,111.0px 13.1px,115.6px 13.6px,120.3px 14.0px,125.2px 14.5px,130.2px 15.0px,135.3px 15.6px,140.6px 16.1px,146.0px 16.7px,151.6px 17.3px,157.2px 17.9px,163.1px 18.6px,169.0px 19.2px,175.2px 19.9px,181.5px 20.6px,187.9px 21.3px,194.5px 22.1px,201.3px 22.8px,208.3px 23.6px,215.4px 24.4px,222.7px 25.3px,230.1px 26.1px,237.7px 27.0px,245.5px 27.9px,253.5px 28.8px,261.6px 29.8px,269.9px 30.7px,278.3px 31.7px,286.9px 32.7px,295.7px 33.7px,304.5px 34.7px,313.5px 35.7px,322.6px 36.8px,331.9px 37.8px,341.2px 38.9px,350.6px 40.0px,360.1px 41.1px,369.5px 42.2px,378.9px 43.2px,388.1px 44.3px,397.3px 45.4px,406.3px 46.4px,415.4px 47.4px,424.4px 48.5px,433.4px 49.5px,442.3px 50.5px,450.9px 51.5px,459.3px 52.5px,467.5px 53.4px,475.4px 54.3px,483.1px 55.2px,490.6px 56.0px,497.8px 56.9px,504.8px 57.7px,511.6px 58.5px,518.0px 59.2px,524.2px 59.9px,530.1px 60.6px,535.8px 61.3px,541.2px 61.9px,546.4px 62.5px,551.3px 63.0px,556.1px 63.6px,560.6px 64.1px,564.9px 64.6px,569.1px 65.1px,573.2px 65.5px,577.1px 66.0px,580.8px 66.4px,584.5px 66.8px,588.0px 67.2px,591.3px 67.6px,594.5px 68.0px,597.6px 68.4px,600.5px 68.7px,603.3px 69.0px,605.9px 69.3px,608.3px 69.6px,610.6px 69.8px,612.8px 70.1px,614.8px 70.3px,616.7px 70.5px,618.5px 70.7px,620.2px 70.9px,621.8px 71.1px,623.2px 71.3px,624.6px 71.4px,625.9px 71.6px,627.1px 71.7px,628.2px 71.9px,629.2px 72.0px,630.1px 72.1px,630.8px 72.2px,631.5px 72.2px,632.2px 72.3px,632.9px 72.4px,633.5px 72.5px,634.1px 72.5px,634.7px 72.6px,635.2px 72.7px,635.7px 72.7px,636.1px 72.8px,636.6px 72.8px,637.1px 72.9px,637.6px 72.9px,638.0px 73.0px,638.5px 73.0px,639.0px 73.1px,639.4px 73.1px,639.8px 73.2px,640.2px 73.2px,640.5px 73.3px,640.8px 73.3px,641.1px 73.3px,641.3px 73.4px,641.5px 73.4px,641.6px 73.4px,641.7px 73.4px,641.8px 73.4px,641.9px 73.4px,642.0px 73.4px,642.1px 73.4px,642.1px 73.5px);isolation:isolate;background:#000"><div style="position:absolute;left:0;top:0;width:100%;height:100%;mix-blend-mode:screen;isolation:isolate"><div style="position:absolute;left:0;top:0;width:100%;height:100%;background:conic-gradient(from 0deg at 180.28px 349.68px,#920000 0deg,#bc0000 2.2deg,#ea0000 4.4deg,#fb0000 5.2deg,#ff0000 5.4deg,#ff0000 76.7deg,#ff0000 148deg,#ff0000 166.8deg,#ff0000 170.1deg,#ff0000 170.7deg,#000000 170.8deg,#000000 242.1deg,#000000 313.4deg,#000000 350deg,#000000 350.8deg,#300000 354.1deg,#5b0000 356.8deg,#890000 359.5deg,#920000 360deg)"></div><div style="position:absolute;left:0;top:0;width:100%;height:100%;mix-blend-mode:darken;background:conic-gradient(from 0deg at 128.27px 29.07px,#ff0000 0deg,#ff0000 71.3deg,#ff0000 128.4deg,#ff0000 134.7deg,#fe0000 134.9deg,#db0000 138.2deg,#bb0000 141.5deg,#990000 145.6deg,#7a0000 149.7deg,#580000 154.8deg,#330000 161.1deg,#090000 168.9deg,#000000 170.7deg,#000000 242deg,#000000 313.3deg,#000000 349.9deg,#000000 350.7deg,#ff0000 350.8deg,#ff0000 358.6deg,#ff0000 359.8deg,#ff0000 360deg)"></div></div><div style="position:absolute;left:0;top:0;width:100%;height:100%;mix-blend-mode:screen;isolation:isolate"><div style="position:absolute;left:0;top:0;width:100%;height:100%;background:conic-gradient(from 0deg at 180.28px 349.68px,#00ff00 0deg,#00ff00 5.1deg,#00fe00 5.4deg,#00e500 6.6deg,#00cb00 8.1deg,#00b400 9.6deg,#009e00 11.4deg,#008700 13.6deg,#007300 15.8deg,#006000 18.5deg,#004c00 21.8deg,#003800 25.9deg,#002500 31deg,#001100 37.3deg,#000200 43.6deg,#000000 44.8deg,#000000 116.1deg,#000000 187.4deg,#000000 224deg,#000000 224.4deg,#00ff00 224.5deg,#00ff00 295.8deg,#00ff00 352.9deg,#00ff00 359.2deg,#00ff00 360deg)"></div><div style="position:absolute;left:0;top:0;width:100%;height:100%;mix-blend-mode:darken;background:conic-gradient(from 0deg at 464.08px 60.46px,#00ff00 0deg,#00ff00 36.6deg,#00ff00 44.4deg,#000000 44.5deg,#000000 115.8deg,#000000 187.1deg,#000000 223.7deg,#000100 224.7deg,#001200 231deg,#002300 236.1deg,#003400 240.2deg,#004900 244.3deg,#005d00 247.6deg,#007100 250.3deg,#008500 252.5deg,#009d00 254.7deg,#00b500 256.5deg,#00cc00 258deg,#00e200 259.2deg,#00fb00 260.4deg,#00ff00 260.6deg,#00ff00 331.9deg,#00ff00 355.4deg,#00ff00 359.5deg,#00ff00 360deg)"></div></div><div style="position:absolute;left:0;top:0;width:100%;height:100%;mix-blend-mode:screen;isolation:isolate"><div style="position:absolute;left:0;top:0;width:100%;height:100%;background:conic-gradient(from 0deg at 128.27px 29.07px,#000000 0deg,#000000 71.3deg,#000000 94.8deg,#000001 95.5deg,#000023 103.3deg,#000042 109.6deg,#000065 115.9deg,#000086 121deg,#0000a3 125.1deg,#0000bf 128.4deg,#0000de 131.7deg,#0000fa 134.4deg,#0000ff 134.8deg,#0000ff 206.1deg,#0000ff 263.2deg,#0000ff 275.3deg,#000000 275.4deg,#000000 346.7deg,#000000 358.8deg,#000000 360deg)"></div><div style="position:absolute;left:0;top:0;width:100%;height:100%;mix-blend-mode:darken;background:conic-gradient(from 0deg at 464.08px 60.46px,#000000 0deg,#000000 71.3deg,#000000 94.8deg,#000000 95.3deg,#0000ff 95.4deg,#0000ff 166.7deg,#0000ff 238deg,#0000ff 256.8deg,#0000ff 260.1deg,#0000ff 260.6deg,#0000d7 262.4deg,#0000ab 264.6deg,#000082 266.8deg,#000055 269.5deg,#00002c 272.2deg,#000006 274.9deg,#000001 275.3deg,#000000 346.6deg,#000000 358.7deg,#000000 359.9deg,#000000 360deg)"></div></div><div style="position:absolute;left:0;top:0;width:100%;height:100%;background:rgba(0,0,0,0.4);clip-path:polygon(evenodd,0 0,100% 0,100% 100%,0 100%,0 0,464.1px 60.5px,128.3px 29.1px,180.3px 349.7px,464.1px 60.5px)"></div></div></div>
<div style="position:absolute;left:1005.00px;top:559.00px;width:1.40px;height:5.50px;background:#ccc;"></div>
<div style="position:absolute;left:1001.71px;top:568.00px;font-size:13.60px;line-height:15px;color:#d4d4d4;white-space:nowrap;transform:scaleX(1.0300);transform-origin:0 0;">0</div>
<div style="position:absolute;left:1000.00px;top:558.60px;width:5.50px;height:1.40px;background:#ccc;"></div>
<div style="position:absolute;left:991.71px;top:553.20px;font-size:13.60px;line-height:15px;color:#d4d4d4;white-space:nowrap;transform:scaleX(1.0300);transform-origin:0 0;">0</div>
<div style="position:absolute;left:1056.55px;top:559.00px;width:1.40px;height:5.50px;background:#ccc;"></div>
<div style="position:absolute;left:1043.52px;top:568.00px;font-size:13.60px;line-height:15px;color:#d4d4d4;white-space:nowrap;transform:scaleX(1.0300);transform-origin:0 0;">0,05</div>
<div style="position:absolute;left:1000.00px;top:518.98px;width:5.50px;height:1.40px;background:#ccc;"></div>
<div style="position:absolute;left:972.24px;top:513.58px;font-size:13.60px;line-height:15px;color:#d4d4d4;white-space:nowrap;transform:scaleX(1.0300);transform-origin:0 0;">0,05</div>
<div style="position:absolute;left:1108.10px;top:559.00px;width:1.40px;height:5.50px;background:#ccc;"></div>
<div style="position:absolute;left:1098.96px;top:568.00px;font-size:13.60px;line-height:15px;color:#d4d4d4;white-space:nowrap;transform:scaleX(1.0300);transform-origin:0 0;">0,1</div>
<div style="position:absolute;left:1000.00px;top:479.36px;width:5.50px;height:1.40px;background:#ccc;"></div>
<div style="position:absolute;left:980.03px;top:473.96px;font-size:13.60px;line-height:15px;color:#d4d4d4;white-space:nowrap;transform:scaleX(1.0300);transform-origin:0 0;">0,1</div>
<div style="position:absolute;left:1159.65px;top:559.00px;width:1.40px;height:5.50px;background:#ccc;"></div>
<div style="position:absolute;left:1146.62px;top:568.00px;font-size:13.60px;line-height:15px;color:#d4d4d4;white-space:nowrap;transform:scaleX(1.0300);transform-origin:0 0;">0,15</div>
<div style="position:absolute;left:1000.00px;top:439.74px;width:5.50px;height:1.40px;background:#ccc;"></div>
<div style="position:absolute;left:972.24px;top:434.34px;font-size:13.60px;line-height:15px;color:#d4d4d4;white-space:nowrap;transform:scaleX(1.0300);transform-origin:0 0;">0,15</div>
<div style="position:absolute;left:1211.20px;top:559.00px;width:1.40px;height:5.50px;background:#ccc;"></div>
<div style="position:absolute;left:1202.06px;top:568.00px;font-size:13.60px;line-height:15px;color:#d4d4d4;white-space:nowrap;transform:scaleX(1.0300);transform-origin:0 0;">0,2</div>
<div style="position:absolute;left:1000.00px;top:400.12px;width:5.50px;height:1.40px;background:#ccc;"></div>
<div style="position:absolute;left:980.03px;top:394.72px;font-size:13.60px;line-height:15px;color:#d4d4d4;white-space:nowrap;transform:scaleX(1.0300);transform-origin:0 0;">0,2</div>
<div style="position:absolute;left:1262.75px;top:559.00px;width:1.40px;height:5.50px;background:#ccc;"></div>
<div style="position:absolute;left:1249.72px;top:568.00px;font-size:13.60px;line-height:15px;color:#d4d4d4;white-space:nowrap;transform:scaleX(1.0300);transform-origin:0 0;">0,25</div>
<div style="position:absolute;left:1000.00px;top:360.50px;width:5.50px;height:1.40px;background:#ccc;"></div>
<div style="position:absolute;left:972.24px;top:355.10px;font-size:13.60px;line-height:15px;color:#d4d4d4;white-space:nowrap;transform:scaleX(1.0300);transform-origin:0 0;">0,25</div>
<div style="position:absolute;left:1314.30px;top:559.00px;width:1.40px;height:5.50px;background:#ccc;"></div>
<div style="position:absolute;left:1305.16px;top:568.00px;font-size:13.60px;line-height:15px;color:#d4d4d4;white-space:nowrap;transform:scaleX(1.0300);transform-origin:0 0;">0,3</div>
<div style="position:absolute;left:1000.00px;top:320.88px;width:5.50px;height:1.40px;background:#ccc;"></div>
<div style="position:absolute;left:980.03px;top:315.48px;font-size:13.60px;line-height:15px;color:#d4d4d4;white-space:nowrap;transform:scaleX(1.0300);transform-origin:0 0;">0,3</div>
<div style="position:absolute;left:1365.85px;top:559.00px;width:1.40px;height:5.50px;background:#ccc;"></div>
<div style="position:absolute;left:1352.82px;top:568.00px;font-size:13.60px;line-height:15px;color:#d4d4d4;white-space:nowrap;transform:scaleX(1.0300);transform-origin:0 0;">0,35</div>
<div style="position:absolute;left:1000.00px;top:281.26px;width:5.50px;height:1.40px;background:#ccc;"></div>
<div style="position:absolute;left:972.24px;top:275.86px;font-size:13.60px;line-height:15px;color:#d4d4d4;white-space:nowrap;transform:scaleX(1.0300);transform-origin:0 0;">0,35</div>
<div style="position:absolute;left:1417.40px;top:559.00px;width:1.40px;height:5.50px;background:#ccc;"></div>
<div style="position:absolute;left:1408.26px;top:568.00px;font-size:13.60px;line-height:15px;color:#d4d4d4;white-space:nowrap;transform:scaleX(1.0300);transform-origin:0 0;">0,4</div>
<div style="position:absolute;left:1000.00px;top:241.64px;width:5.50px;height:1.40px;background:#ccc;"></div>
<div style="position:absolute;left:980.03px;top:236.24px;font-size:13.60px;line-height:15px;color:#d4d4d4;white-space:nowrap;transform:scaleX(1.0300);transform-origin:0 0;">0,4</div>
<div style="position:absolute;left:1468.95px;top:559.00px;width:1.40px;height:5.50px;background:#ccc;"></div>
<div style="position:absolute;left:1455.92px;top:568.00px;font-size:13.60px;line-height:15px;color:#d4d4d4;white-space:nowrap;transform:scaleX(1.0300);transform-origin:0 0;">0,45</div>
<div style="position:absolute;left:1000.00px;top:202.02px;width:5.50px;height:1.40px;background:#ccc;"></div>
<div style="position:absolute;left:972.24px;top:196.62px;font-size:13.60px;line-height:15px;color:#d4d4d4;white-space:nowrap;transform:scaleX(1.0300);transform-origin:0 0;">0,45</div>
<div style="position:absolute;left:1520.50px;top:559.00px;width:1.40px;height:5.50px;background:#ccc;"></div>
<div style="position:absolute;left:1511.36px;top:568.00px;font-size:13.60px;line-height:15px;color:#d4d4d4;white-space:nowrap;transform:scaleX(1.0300);transform-origin:0 0;">0,5</div>
<div style="position:absolute;left:1000.00px;top:162.40px;width:5.50px;height:1.40px;background:#ccc;"></div>
<div style="position:absolute;left:980.03px;top:157.00px;font-size:13.60px;line-height:15px;color:#d4d4d4;white-space:nowrap;transform:scaleX(1.0300);transform-origin:0 0;">0,5</div>
<div style="position:absolute;left:1572.05px;top:559.00px;width:1.40px;height:5.50px;background:#ccc;"></div>
<div style="position:absolute;left:1559.02px;top:568.00px;font-size:13.60px;line-height:15px;color:#d4d4d4;white-space:nowrap;transform:scaleX(1.0300);transform-origin:0 0;">0,55</div>
<div style="position:absolute;left:1000.00px;top:122.78px;width:5.50px;height:1.40px;background:#ccc;"></div>
<div style="position:absolute;left:972.24px;top:117.38px;font-size:13.60px;line-height:15px;color:#d4d4d4;white-space:nowrap;transform:scaleX(1.0300);transform-origin:0 0;">0,55</div>
<svg style="position:absolute;left:0;top:0" width="1645" height="899"><rect x="1127.8" y="105.8" width="12.4" height="12.4" fill="none" stroke="#fff" stroke-opacity="0.85" stroke-width="1.5"/><rect x="1151.3" y="129.2" width="12.4" height="12.4" fill="none" stroke="#fff" stroke-opacity="0.85" stroke-width="1.5"/><rect x="1189.2" y="121.2" width="12.4" height="12.4" fill="none" stroke="#fff" stroke-opacity="0.85" stroke-width="1.5"/><rect x="1209.3" y="113.3" width="12.4" height="12.4" fill="none" stroke="#fff" stroke-opacity="0.85" stroke-width="1.5"/><rect x="1235.7" y="117.2" width="12.4" height="12.4" fill="none" stroke="#fff" stroke-opacity="0.85" stroke-width="1.5"/><rect x="1266.0" y="123.7" width="12.4" height="12.4" fill="none" stroke="#fff" stroke-opacity="0.85" stroke-width="1.5"/><rect x="1186.9" y="142.3" width="12.4" height="12.4" fill="none" stroke="#fff" stroke-opacity="0.85" stroke-width="1.5"/><rect x="1249.9" y="155.7" width="12.4" height="12.4" fill="none" stroke="#fff" stroke-opacity="0.85" stroke-width="1.5"/><rect x="1239.2" y="162.3" width="12.4" height="12.4" fill="none" stroke="#fff" stroke-opacity="0.85" stroke-width="1.5"/><rect x="1157.8" y="172.7" width="12.4" height="12.4" fill="none" stroke="#fff" stroke-opacity="0.85" stroke-width="1.5"/><rect x="1142.2" y="190.6" width="12.4" height="12.4" fill="none" stroke="#fff" stroke-opacity="0.85" stroke-width="1.5"/><rect x="1147.2" y="221.1" width="12.4" height="12.4" fill="none" stroke="#fff" stroke-opacity="0.85" stroke-width="1.5"/><rect x="1180.2" y="218.8" width="12.4" height="12.4" fill="none" stroke="#fff" stroke-opacity="0.85" stroke-width="1.5"/><rect x="1199.8" y="224.0" width="12.4" height="12.4" fill="none" stroke="#fff" stroke-opacity="0.85" stroke-width="1.5"/><rect x="1234.2" y="241.3" width="12.4" height="12.4" fill="none" stroke="#fff" stroke-opacity="0.85" stroke-width="1.5"/><rect x="1182.8" y="270.2" width="12.4" height="12.4" fill="none" stroke="#fff" stroke-opacity="0.85" stroke-width="1.5"/><rect x="1182.8" y="318.8" width="12.4" height="12.4" fill="none" stroke="#fff" stroke-opacity="0.85" stroke-width="1.5"/><rect x="1180.2" y="426.9" width="12.4" height="12.4" fill="none" stroke="#fff" stroke-opacity="0.85" stroke-width="1.5"/><rect x="1294.9" y="213.7" width="12.4" height="12.4" fill="none" stroke="#fff" stroke-opacity="0.85" stroke-width="1.5"/><rect x="1313.4" y="289.6" width="12.4" height="12.4" fill="none" stroke="#fff" stroke-opacity="0.85" stroke-width="1.5"/><rect x="1326.3" y="168.7" width="12.4" height="12.4" fill="none" stroke="#fff" stroke-opacity="0.85" stroke-width="1.5"/><rect x="1307.8" y="127.6" width="12.4" height="12.4" fill="none" stroke="#fff" stroke-opacity="0.85" stroke-width="1.5"/><rect x="1385.9" y="156.9" width="12.4" height="12.4" fill="none" stroke="#fff" stroke-opacity="0.85" stroke-width="1.5"/><rect x="1463.3" y="137.2" width="12.4" height="12.4" fill="none" stroke="#fff" stroke-opacity="0.85" stroke-width="1.5"/><circle cx="1131.8" cy="113.5" r="4.1" fill="#00ff00" stroke="#111" stroke-width="1.1"/><circle cx="1152.5" cy="134.5" r="4.1" fill="#5c9450" stroke="#111" stroke-width="1.1"/><circle cx="1191.6" cy="126.3" r="4.1" fill="#a8b850" stroke="#111" stroke-width="1.1"/><circle cx="1211.4" cy="121.2" r="4.1" fill="#ffff00" stroke="#111" stroke-width="1.1"/><circle cx="1236.6" cy="123.4" r="4.1" fill="#e8c830" stroke="#111" stroke-width="1.1"/><circle cx="1265.5" cy="127.6" r="4.1" fill="#e0a640" stroke="#111" stroke-width="1.1"/><circle cx="1187.4" cy="146.0" r="4.1" fill="#5e7040" stroke="#111" stroke-width="1.1"/><circle cx="1258.5" cy="160.5" r="4.1" fill="#70503e" stroke="#111" stroke-width="1.1"/><circle cx="1241.5" cy="167.1" r="4.1" fill="#c09a88" stroke="#111" stroke-width="1.1"/><circle cx="1161.4" cy="180.3" r="4.1" fill="#7cc0b0" stroke="#111" stroke-width="1.1"/><circle cx="1147.1" cy="195.9" r="4.1" fill="#00ffff" stroke="#111" stroke-width="1.1"/><circle cx="1149.4" cy="226.7" r="4.1" fill="#1088a8" stroke="#111" stroke-width="1.1"/><circle cx="1182.3" cy="223.5" r="4.1" fill="#6080a8" stroke="#111" stroke-width="1.1"/><circle cx="1203.7" cy="227.6" r="4.1" fill="#8888c0" stroke="#111" stroke-width="1.1"/><circle cx="1240.4" cy="248.4" r="4.1" fill="#6c4880" stroke="#111" stroke-width="1.1"/><circle cx="1186.7" cy="277.3" r="4.1" fill="#4860b0" stroke="#111" stroke-width="1.1"/><circle cx="1187.5" cy="330.5" r="4.1" fill="#3848a0" stroke="#111" stroke-width="1.1"/><circle cx="1189.0" cy="433.1" r="4.1" fill="#0000ff" stroke="#111" stroke-width="1.1"/><circle cx="1302.4" cy="219.5" r="4.1" fill="#c86098" stroke="#111" stroke-width="1.1"/><circle cx="1321.7" cy="293.2" r="4.1" fill="#ff00ff" stroke="#111" stroke-width="1.1"/><circle cx="1333.8" cy="175.1" r="4.1" fill="#d06070" stroke="#111" stroke-width="1.1"/><circle cx="1314.6" cy="132.7" r="4.1" fill="#e08838" stroke="#111" stroke-width="1.1"/><circle cx="1400.9" cy="160.5" r="4.1" fill="#c04048" stroke="#111" stroke-width="1.1"/><circle cx="1473.4" cy="142.1" r="4.1" fill="#ff0000" stroke="#500" stroke-width="1.1"/><rect x="1203.2" y="181.2" width="11.4" height="11.4" fill="#e8e8e8" stroke="#000" stroke-width="2.2"/><circle cx="1204.2" cy="186.6" r="4.1" fill="#ddd" stroke="#222" stroke-width="1"/><circle cx="1206.6" cy="186.0" r="4.1" fill="#a0a0a0" stroke="#222" stroke-width="1"/><circle cx="1226" cy="190.6" r="4.9" fill="#000"/></svg>
<div style="position:absolute;left:1426.00px;top:392.00px;width:193.00px;height:126.40px;border:1px solid #8c8c78;background:#888;"></div>
<div style="position:absolute;left:1427.00px;top:393.00px;width:191.00px;height:124.00px;overflow:hidden;"><div style="position:absolute;left:0;top:0;width:100%;height:100%;isolation:isolate;background:#000"><div style="position:absolute;left:0;top:0;width:100%;height:100%;mix-blend-mode:screen;isolation:isolate"><div style="position:absolute;left:0;top:0;width:100%;height:100%;background:conic-gradient(from 0deg at -956.42px 1199.93px,#000000 0deg,#000000 18.8deg,#000000 22.9deg,#030000 23.4deg,#210000 26.7deg,#420000 30deg,#600000 32.7deg,#830000 35.4deg,#a30000 37.6deg,#c70000 39.8deg,#e80000 41.6deg,#fc0000 42.6deg,#fe0000 42.7deg,#ff0000 44.2deg,#ff0000 115.5deg,#ff0000 186.8deg,#ff0000 201.9deg,#ff0000 202.9deg,#000000 203deg,#000000 274.3deg,#000000 345.6deg,#000000 357.7deg,#000000 359.9deg,#000000 360deg)"></div><div style="position:absolute;left:0;top:0;width:100%;height:100%;mix-blend-mode:darken;background:conic-gradient(from 0deg at -370.67px -180.85px,#000000 0deg,#000000 18.8deg,#000000 22.9deg,#ff0000 23deg,#ff0000 94.3deg,#ff0000 165.6deg,#ff0000 175.3deg,#ff0000 175.9deg,#d20000 180deg,#9e0000 185.1deg,#640000 191.4deg,#200000 199.2deg,#040000 202.5deg,#000000 203deg,#000000 274.3deg,#000000 345.6deg,#000000 357.7deg,#000000 359.9deg,#000000 360deg)"></div></div><div style="position:absolute;left:0;top:0;width:100%;height:100%;mix-blend-mode:screen;isolation:isolate"><div style="position:absolute;left:0;top:0;width:100%;height:100%;background:conic-gradient(from 0deg at -956.42px 1199.93px,#00ff00 0deg,#00ff00 36.6deg,#00ff00 41.7deg,#00ff00 42.7deg,#00dd00 44.5deg,#00bf00 46.3deg,#00a500 48.1deg,#008a00 50.3deg,#007300 52.5deg,#005b00 55.2deg,#004100 58.5deg,#002b00 61.8deg,#001400 65.9deg,#000100 70deg,#000000 71.2deg,#000000 142.5deg,#000000 213.8deg,#000000 243.1deg,#000000 249.4deg,#000000 250.1deg,#00ff00 250.2deg,#00ff00 321.5deg,#00ff00 358.1deg,#00ff00 359.9deg,#00ff00 360deg)"></div><div style="position:absolute;left:0;top:0;width:100%;height:100%;mix-blend-mode:darken;background:conic-gradient(from 0deg at 957.03px 509.54px,#00ff00 0deg,#00ff00 57.1deg,#00ff00 69.2deg,#00ff00 70deg,#00ff00 70.1deg,#000000 70.2deg,#000000 141.5deg,#000000 212.8deg,#000000 249.4deg,#000000 250.2deg,#001d00 253.5deg,#003e00 256.8deg,#005c00 259.5deg,#007e00 262.2deg,#009e00 264.4deg,#00c100 266.6deg,#00e100 268.4deg,#00ff00 269.9deg,#00ff00 341.2deg,#00ff00 360deg)"></div></div><div style="position:absolute;left:0;top:0;width:100%;height:100%;mix-blend-mode:screen;isolation:isolate"><div style="position:absolute;left:0;top:0;width:100%;height:100%;background:conic-gradient(from 0deg at -370.67px -180.85px,#000000 0deg,#000000 71.3deg,#000000 117deg,#000001 118deg,#000027 133.1deg,#000043 142.8deg,#000058 149.1deg,#000071 155.4deg,#00008a 160.5deg,#0000a1 164.6deg,#0000b7 167.9deg,#0000d1 171.2deg,#0000ea 173.9deg,#0000fd 175.7deg,#0000ff 175.9deg,#0000ff 247.2deg,#0000ff 292.9deg,#0000ff 297deg,#0000ff 297.4deg,#000000 297.5deg,#000000 354.6deg,#000000 359.7deg,#000000 360deg)"></div><div style="position:absolute;left:0;top:0;width:100%;height:100%;mix-blend-mode:darken;background:conic-gradient(from 0deg at 957.03px 509.54px,#000000 0deg,#000000 71.3deg,#000000 117deg,#000000 117.4deg,#0000ff 117.5deg,#0000ff 188.8deg,#0000ff 260.1deg,#0000ff 269.8deg,#0000ff 269.9deg,#0000e2 271.4deg,#0000c3 273.2deg,#0000a9 275deg,#00008e 277.2deg,#000076 279.4deg,#00005d 282.1deg,#000043 285.4deg,#00002e 288.7deg,#000016 292.8deg,#000003 296.9deg,#000000 297.6deg,#000000 354.7deg,#000000 359.8deg,#000000 360deg)"></div></div><div style="position:absolute;left:0;top:0;width:100%;height:100%;background:rgba(0,0,0,0.4);clip-path:polygon(evenodd,-10px -10px,300px -10px,300px 300px,-10px 300px,-10px -10px,957.0px 509.5px,-370.7px -180.8px,-956.4px 1199.9px,957.0px 509.5px)"></div></div></div>
<svg style="position:absolute;left:0;top:0" width="1645" height="899"><rect x="1515.8" y="448" width="12.4" height="12.4" fill="none" stroke="#fff" stroke-opacity="0.9" stroke-width="1.4"/><circle cx="1489.1" cy="454.6" r="4.2" fill="none" stroke="#111" stroke-width="1.5"/><path d="M1597 516.6h5" stroke="#222" stroke-width="1.2"/></svg>
<div style="position:absolute;left:1377.50px;top:528.00px;width:246.50px;height:25.70px;background:#333;"></div>
<div style="position:absolute;left:1378.60px;top:531.00px;font-size:19.30px;line-height:21px;color:#eef2f6;white-space:nowrap;transform:scaleX(0.9829);transform-origin:0 0;">RGB Triplet: 255, 255, 0</div>
<div style="position:absolute;left:333.00px;top:608.00px;width:1299.80px;height:201.80px;overflow:hidden;background:#424242;"><div style="position:absolute;left:0;top:0;width:100%;height:26.6px;background:linear-gradient(#3a3a3a 0%,#2e2e2e 45%,#1a1a1a 55%,#161616 100%)"></div><div style="position:absolute;left:0;top:0;width:15.2px;height:26.6px;background:#000"></div><div style="position:absolute;left:148.30px;top:6.00px;font-size:14.20px;line-height:16px;color:#f4f4f4;white-space:nowrap;transform:scaleX(1.245);transform-origin:0 0;text-shadow:0.35px 0 0 #f4f4f4;">White</div><div style="position:absolute;left:235.00px;top:6.00px;font-size:14.20px;line-height:16px;color:#f4f4f4;white-space:nowrap;transform:scaleX(1.152);transform-origin:0 0;text-shadow:0.35px 0 0 #f4f4f4;">Gray 80</div><div style="position:absolute;left:321.60px;top:6.00px;font-size:14.20px;line-height:16px;color:#f4f4f4;white-space:nowrap;transform:scaleX(1.152);transform-origin:0 0;text-shadow:0.35px 0 0 #f4f4f4;">Gray 65</div><div style="position:absolute;left:408.30px;top:6.00px;font-size:14.20px;line-height:16px;color:#f4f4f4;white-space:nowrap;transform:scaleX(1.152);transform-origin:0 0;text-shadow:0.35px 0 0 #f4f4f4;">Gray 50</div><div style="position:absolute;left:495.00px;top:6.00px;font-size:14.20px;line-height:16px;color:#f4f4f4;white-space:nowrap;transform:scaleX(1.152);transform-origin:0 0;text-shadow:0.35px 0 0 #f4f4f4;">Gray 35</div><div style="position:absolute;left:582.00px;top:6.00px;font-size:14.20px;line-height:16px;color:#f4f4f4;white-space:nowrap;transform:scaleX(1.210);transform-origin:0 0;text-shadow:0.35px 0 0 #f4f4f4;">Black</div><div style="position:absolute;left:648.70px;top:6.00px;font-size:14.20px;line-height:16px;color:#f4f4f4;white-space:nowrap;transform:scaleX(1.149);transform-origin:0 0;text-shadow:0.35px 0 0 #f4f4f4;">Dark Skin</div><div style="position:absolute;left:729.40px;top:6.00px;font-size:14.20px;line-height:16px;color:#f4f4f4;white-space:nowrap;transform:scaleX(1.171);transform-origin:0 0;text-shadow:0.35px 0 0 #f4f4f4;">Light Skin</div><div style="position:absolute;left:816.10px;top:6.00px;font-size:14.20px;line-height:16px;color:#f4f4f4;white-space:nowrap;transform:scaleX(1.139);transform-origin:0 0;text-shadow:0.35px 0 0 #f4f4f4;">Blue Sky</div><div style="position:absolute;left:892.80px;top:6.00px;font-size:14.20px;line-height:16px;color:#f4f4f4;white-space:nowrap;transform:scaleX(1.164);transform-origin:0 0;text-shadow:0.35px 0 0 #f4f4f4;">Foliage</div><div style="position:absolute;left:969.00px;top:6.00px;font-size:14.20px;line-height:16px;color:#f4f4f4;white-space:nowrap;transform:scaleX(1.204);transform-origin:0 0;text-shadow:0.35px 0 0 #f4f4f4;">Blue Flower</div><div style="position:absolute;left:1069.30px;top:6.00px;font-size:14.20px;line-height:16px;color:#f4f4f4;white-space:nowrap;transform:scaleX(1.183);transform-origin:0 0;text-shadow:0.35px 0 0 #f4f4f4;">Bluish Green</div><div style="position:absolute;left:1176.50px;top:6.00px;font-size:14.20px;line-height:16px;color:#f4f4f4;white-space:nowrap;transform:scaleX(1.170);transform-origin:0 0;text-shadow:0.35px 0 0 #f4f4f4;">Orange</div><div style="position:absolute;left:1263.60px;top:6.00px;font-size:14.20px;line-height:16px;color:#f4f4f4;white-space:nowrap;transform:scaleX(1.207);transform-origin:0 0;text-shadow:0.35px 0 0 #f4f4f4;">Purplish Blue</div><div style="position:absolute;left:0;top:27.0px;width:100%;height:25.2px;background:#424242"></div><div style="position:absolute;left:0;top:27.0px;width:15.2px;height:25px;background:linear-gradient(#262626,#363636)"></div><div style="position:absolute;left:20.30px;top:31.80px;font-size:15.20px;line-height:17px;color:#f2f2f2;white-space:nowrap;transform:scaleX(1.079);transform-origin:0 0;">x: CIE31</div><div style="position:absolute;left:148.30px;top:31.80px;font-size:15.20px;line-height:17px;color:#f2f2f2;white-space:nowrap;transform:scaleX(1.162);transform-origin:0 0;">0,3071</div><div style="position:absolute;left:235.00px;top:31.80px;font-size:15.20px;line-height:17px;color:#f2f2f2;white-space:nowrap;transform:scaleX(1.162);transform-origin:0 0;">0,3090</div><div style="position:absolute;left:321.60px;top:31.80px;font-size:15.20px;line-height:17px;color:#f2f2f2;white-space:nowrap;transform:scaleX(1.162);transform-origin:0 0;">0,3076</div><div style="position:absolute;left:408.30px;top:31.80px;font-size:15.20px;line-height:17px;color:#f2f2f2;white-space:nowrap;transform:scaleX(1.162);transform-origin:0 0;">0,3080</div><div style="position:absolute;left:495.00px;top:31.80px;font-size:15.20px;line-height:17px;color:#f2f2f2;white-space:nowrap;transform:scaleX(1.162);transform-origin:0 0;">0,3104</div><div style="position:absolute;left:582.00px;top:31.80px;font-size:15.20px;line-height:17px;color:#f2f2f2;white-space:nowrap;transform:scaleX(1.162);transform-origin:0 0;">0,3273</div><div style="position:absolute;left:648.70px;top:31.80px;font-size:15.20px;line-height:17px;color:#f2f2f2;white-space:nowrap;transform:scaleX(1.162);transform-origin:0 0;">0,4056</div><div style="position:absolute;left:729.40px;top:31.80px;font-size:15.20px;line-height:17px;color:#f2f2f2;white-space:nowrap;transform:scaleX(1.162);transform-origin:0 0;">0,3766</div><div style="position:absolute;left:816.10px;top:31.80px;font-size:15.20px;line-height:17px;color:#f2f2f2;white-space:nowrap;transform:scaleX(1.162);transform-origin:0 0;">0,2464</div><div style="position:absolute;left:892.80px;top:31.80px;font-size:15.20px;line-height:17px;color:#f2f2f2;white-space:nowrap;transform:scaleX(1.162);transform-origin:0 0;">0,3348</div><div style="position:absolute;left:969.00px;top:31.80px;font-size:15.20px;line-height:17px;color:#f2f2f2;white-space:nowrap;transform:scaleX(1.162);transform-origin:0 0;">0,2667</div><div style="position:absolute;left:1069.30px;top:31.80px;font-size:15.20px;line-height:17px;color:#f2f2f2;white-space:nowrap;transform:scaleX(1.162);transform-origin:0 0;">0,2581</div><div style="position:absolute;left:1176.50px;top:31.80px;font-size:15.20px;line-height:17px;color:#f2f2f2;white-space:nowrap;transform:scaleX(1.162);transform-origin:0 0;">0,5166</div><div style="position:absolute;left:1263.60px;top:31.80px;font-size:15.20px;line-height:17px;color:#f2f2f2;white-space:nowrap;transform:scaleX(1.162);transform-origin:0 0;">0,2145</div><div style="position:absolute;left:0;top:52.0px;width:100%;height:25.2px;background:#808080"></div><div style="position:absolute;left:0;top:52.0px;width:15.2px;height:25px;background:linear-gradient(#262626,#363636)"></div><div style="position:absolute;left:20.30px;top:56.68px;font-size:15.20px;line-height:17px;color:#f2f2f2;white-space:nowrap;transform:scaleX(1.079);transform-origin:0 0;">y: CIE31</div><div style="position:absolute;left:148.30px;top:56.68px;font-size:15.20px;line-height:17px;color:#f2f2f2;white-space:nowrap;transform:scaleX(1.162);transform-origin:0 0;">0,3299</div><div style="position:absolute;left:235.00px;top:56.68px;font-size:15.20px;line-height:17px;color:#f2f2f2;white-space:nowrap;transform:scaleX(1.162);transform-origin:0 0;">0,3289</div><div style="position:absolute;left:321.60px;top:56.68px;font-size:15.20px;line-height:17px;color:#f2f2f2;white-space:nowrap;transform:scaleX(1.162);transform-origin:0 0;">0,3276</div><div style="position:absolute;left:408.30px;top:56.68px;font-size:15.20px;line-height:17px;color:#f2f2f2;white-space:nowrap;transform:scaleX(1.162);transform-origin:0 0;">0,3281</div><div style="position:absolute;left:495.00px;top:56.68px;font-size:15.20px;line-height:17px;color:#f2f2f2;white-space:nowrap;transform:scaleX(1.162);transform-origin:0 0;">0,3327</div><div style="position:absolute;left:582.00px;top:56.68px;font-size:15.20px;line-height:17px;color:#f2f2f2;white-space:nowrap;transform:scaleX(1.162);transform-origin:0 0;">0,3144</div><div style="position:absolute;left:648.70px;top:56.68px;font-size:15.20px;line-height:17px;color:#f2f2f2;white-space:nowrap;transform:scaleX(1.162);transform-origin:0 0;">0,3684</div><div style="position:absolute;left:729.40px;top:56.68px;font-size:15.20px;line-height:17px;color:#f2f2f2;white-space:nowrap;transform:scaleX(1.162);transform-origin:0 0;">0,3589</div><div style="position:absolute;left:816.10px;top:56.68px;font-size:15.20px;line-height:17px;color:#f2f2f2;white-space:nowrap;transform:scaleX(1.162);transform-origin:0 0;">0,2691</div><div style="position:absolute;left:892.80px;top:56.68px;font-size:15.20px;line-height:17px;color:#f2f2f2;white-space:nowrap;transform:scaleX(1.162);transform-origin:0 0;">0,4371</div><div style="position:absolute;left:969.00px;top:56.68px;font-size:15.20px;line-height:17px;color:#f2f2f2;white-space:nowrap;transform:scaleX(1.162);transform-origin:0 0;">0,2559</div><div style="position:absolute;left:1069.30px;top:56.68px;font-size:15.20px;line-height:17px;color:#f2f2f2;white-space:nowrap;transform:scaleX(1.162);transform-origin:0 0;">0,3592</div><div style="position:absolute;left:1176.50px;top:56.68px;font-size:15.20px;line-height:17px;color:#f2f2f2;white-space:nowrap;transform:scaleX(1.162);transform-origin:0 0;">0,4117</div><div style="position:absolute;left:1263.60px;top:56.68px;font-size:15.20px;line-height:17px;color:#f2f2f2;white-space:nowrap;transform:scaleX(1.162);transform-origin:0 0;">0,1930</div><div style="position:absolute;left:0;top:76.9px;width:100%;height:25.2px;background:#424242"></div><div style="position:absolute;left:0;top:76.9px;width:15.2px;height:25px;background:linear-gradient(#262626,#363636)"></div><div style="position:absolute;left:20.30px;top:81.56px;font-size:15.20px;line-height:17px;color:#f2f2f2;white-space:nowrap;transform:scaleX(0.986);transform-origin:0 0;">Y</div><div style="position:absolute;left:148.30px;top:81.56px;font-size:15.20px;line-height:17px;color:#f2f2f2;white-space:nowrap;transform:scaleX(1.162);transform-origin:0 0;">429,0776</div><div style="position:absolute;left:235.00px;top:81.56px;font-size:15.20px;line-height:17px;color:#f2f2f2;white-space:nowrap;transform:scaleX(1.162);transform-origin:0 0;">340,4624</div><div style="position:absolute;left:321.60px;top:81.56px;font-size:15.20px;line-height:17px;color:#f2f2f2;white-space:nowrap;transform:scaleX(1.162);transform-origin:0 0;">273,6795</div><div style="position:absolute;left:408.30px;top:81.56px;font-size:15.20px;line-height:17px;color:#f2f2f2;white-space:nowrap;transform:scaleX(1.162);transform-origin:0 0;">212,0961</div><div style="position:absolute;left:495.00px;top:81.56px;font-size:15.20px;line-height:17px;color:#f2f2f2;white-space:nowrap;transform:scaleX(1.162);transform-origin:0 0;">150,7521</div><div style="position:absolute;left:582.00px;top:81.56px;font-size:15.20px;line-height:17px;color:#f2f2f2;white-space:nowrap;transform:scaleX(1.162);transform-origin:0 0;">0,0200</div><div style="position:absolute;left:648.70px;top:81.56px;font-size:15.20px;line-height:17px;color:#f2f2f2;white-space:nowrap;transform:scaleX(1.162);transform-origin:0 0;">41,7700</div><div style="position:absolute;left:729.40px;top:81.56px;font-size:15.20px;line-height:17px;color:#f2f2f2;white-space:nowrap;transform:scaleX(1.162);transform-origin:0 0;">152,2868</div><div style="position:absolute;left:816.10px;top:81.56px;font-size:15.20px;line-height:17px;color:#f2f2f2;white-space:nowrap;transform:scaleX(1.162);transform-origin:0 0;">80,2954</div><div style="position:absolute;left:892.80px;top:81.56px;font-size:15.20px;line-height:17px;color:#f2f2f2;white-space:nowrap;transform:scaleX(1.162);transform-origin:0 0;">54,3715</div><div style="position:absolute;left:969.00px;top:81.56px;font-size:15.20px;line-height:17px;color:#f2f2f2;white-space:nowrap;transform:scaleX(1.162);transform-origin:0 0;">101,5884</div><div style="position:absolute;left:1069.30px;top:81.56px;font-size:15.20px;line-height:17px;color:#f2f2f2;white-space:nowrap;transform:scaleX(1.162);transform-origin:0 0;">178,6995</div><div style="position:absolute;left:1176.50px;top:81.56px;font-size:15.20px;line-height:17px;color:#f2f2f2;white-space:nowrap;transform:scaleX(1.162);transform-origin:0 0;">123,6584</div><div style="position:absolute;left:1263.60px;top:81.56px;font-size:15.20px;line-height:17px;color:#f2f2f2;white-space:nowrap;transform:scaleX(1.162);transform-origin:0 0;">48,9312</div><div style="position:absolute;left:0;top:101.9px;width:100%;height:25.2px;background:#808080"></div><div style="position:absolute;left:0;top:101.9px;width:15.2px;height:25px;background:linear-gradient(#262626,#363636)"></div><div style="position:absolute;left:20.30px;top:106.44px;font-size:15.20px;line-height:17px;color:#f2f2f2;white-space:nowrap;transform:scaleX(1.144);transform-origin:0 0;">Target x:CIE31</div><div style="position:absolute;left:148.30px;top:106.44px;font-size:15.20px;line-height:17px;color:#f2f2f2;white-space:nowrap;transform:scaleX(1.162);transform-origin:0 0;">0,3127</div><div style="position:absolute;left:235.00px;top:106.44px;font-size:15.20px;line-height:17px;color:#f2f2f2;white-space:nowrap;transform:scaleX(1.162);transform-origin:0 0;">0,3127</div><div style="position:absolute;left:321.60px;top:106.44px;font-size:15.20px;line-height:17px;color:#f2f2f2;white-space:nowrap;transform:scaleX(1.162);transform-origin:0 0;">0,3127</div><div style="position:absolute;left:408.30px;top:106.44px;font-size:15.20px;line-height:17px;color:#f2f2f2;white-space:nowrap;transform:scaleX(1.162);transform-origin:0 0;">0,3127</div><div style="position:absolute;left:495.00px;top:106.44px;font-size:15.20px;line-height:17px;color:#f2f2f2;white-space:nowrap;transform:scaleX(1.162);transform-origin:0 0;">0,3127</div><div style="position:absolute;left:582.00px;top:106.44px;font-size:15.20px;line-height:17px;color:#f2f2f2;white-space:nowrap;transform:scaleX(1.162);transform-origin:0 0;">0,3127</div><div style="position:absolute;left:648.70px;top:106.44px;font-size:15.20px;line-height:17px;color:#f2f2f2;white-space:nowrap;transform:scaleX(1.162);transform-origin:0 0;">0,4003</div><div style="position:absolute;left:729.40px;top:106.44px;font-size:15.20px;line-height:17px;color:#f2f2f2;white-space:nowrap;transform:scaleX(1.162);transform-origin:0 0;">0,3795</div><div style="position:absolute;left:816.10px;top:106.44px;font-size:15.20px;line-height:17px;color:#f2f2f2;white-space:nowrap;transform:scaleX(1.162);transform-origin:0 0;">0,2496</div><div style="position:absolute;left:892.80px;top:106.44px;font-size:15.20px;line-height:17px;color:#f2f2f2;white-space:nowrap;transform:scaleX(1.162);transform-origin:0 0;">0,3395</div><div style="position:absolute;left:969.00px;top:106.44px;font-size:15.20px;line-height:17px;color:#f2f2f2;white-space:nowrap;transform:scaleX(1.162);transform-origin:0 0;">0,2681</div><div style="position:absolute;left:1069.30px;top:106.44px;font-size:15.20px;line-height:17px;color:#f2f2f2;white-space:nowrap;transform:scaleX(1.162);transform-origin:0 0;">0,2626</div><div style="position:absolute;left:1176.50px;top:106.44px;font-size:15.20px;line-height:17px;color:#f2f2f2;white-space:nowrap;transform:scaleX(1.162);transform-origin:0 0;">0,5122</div><div style="position:absolute;left:1263.60px;top:106.44px;font-size:15.20px;line-height:17px;color:#f2f2f2;white-space:nowrap;transform:scaleX(1.162);transform-origin:0 0;">0,2161</div><div style="position:absolute;left:0;top:126.8px;width:100%;height:25.2px;background:#424242"></div><div style="position:absolute;left:0;top:126.8px;width:15.2px;height:25px;background:linear-gradient(#262626,#363636)"></div><div style="position:absolute;left:20.30px;top:131.32px;font-size:15.20px;line-height:17px;color:#f2f2f2;white-space:nowrap;transform:scaleX(1.154);transform-origin:0 0;">Target y:CIE31</div><div style="position:absolute;left:148.30px;top:131.32px;font-size:15.20px;line-height:17px;color:#f2f2f2;white-space:nowrap;transform:scaleX(1.162);transform-origin:0 0;">0,3290</div><div style="position:absolute;left:235.00px;top:131.32px;font-size:15.20px;line-height:17px;color:#f2f2f2;white-space:nowrap;transform:scaleX(1.162);transform-origin:0 0;">0,3290</div><div style="position:absolute;left:321.60px;top:131.32px;font-size:15.20px;line-height:17px;color:#f2f2f2;white-space:nowrap;transform:scaleX(1.162);transform-origin:0 0;">0,3290</div><div style="position:absolute;left:408.30px;top:131.32px;font-size:15.20px;line-height:17px;color:#f2f2f2;white-space:nowrap;transform:scaleX(1.162);transform-origin:0 0;">0,3290</div><div style="position:absolute;left:495.00px;top:131.32px;font-size:15.20px;line-height:17px;color:#f2f2f2;white-space:nowrap;transform:scaleX(1.162);transform-origin:0 0;">0,3290</div><div style="position:absolute;left:582.00px;top:131.32px;font-size:15.20px;line-height:17px;color:#f2f2f2;white-space:nowrap;transform:scaleX(1.162);transform-origin:0 0;">0,3290</div><div style="position:absolute;left:648.70px;top:131.32px;font-size:15.20px;line-height:17px;color:#f2f2f2;white-space:nowrap;transform:scaleX(1.162);transform-origin:0 0;">0,3642</div><div style="position:absolute;left:729.40px;top:131.32px;font-size:15.20px;line-height:17px;color:#f2f2f2;white-space:nowrap;transform:scaleX(1.162);transform-origin:0 0;">0,3562</div><div style="position:absolute;left:816.10px;top:131.32px;font-size:15.20px;line-height:17px;color:#f2f2f2;white-space:nowrap;transform:scaleX(1.162);transform-origin:0 0;">0,2656</div><div style="position:absolute;left:892.80px;top:131.32px;font-size:15.20px;line-height:17px;color:#f2f2f2;white-space:nowrap;transform:scaleX(1.162);transform-origin:0 0;">0,4271</div><div style="position:absolute;left:969.00px;top:131.32px;font-size:15.20px;line-height:17px;color:#f2f2f2;white-space:nowrap;transform:scaleX(1.162);transform-origin:0 0;">0,2525</div><div style="position:absolute;left:1069.30px;top:131.32px;font-size:15.20px;line-height:17px;color:#f2f2f2;white-space:nowrap;transform:scaleX(1.162);transform-origin:0 0;">0,3616</div><div style="position:absolute;left:1176.50px;top:131.32px;font-size:15.20px;line-height:17px;color:#f2f2f2;white-space:nowrap;transform:scaleX(1.162);transform-origin:0 0;">0,4063</div><div style="position:absolute;left:1263.60px;top:131.32px;font-size:15.20px;line-height:17px;color:#f2f2f2;white-space:nowrap;transform:scaleX(1.162);transform-origin:0 0;">0,1921</div><div style="position:absolute;left:0;top:151.8px;width:100%;height:25.2px;background:#808080"></div><div style="position:absolute;left:0;top:151.8px;width:15.2px;height:25px;background:linear-gradient(#262626,#363636)"></div><div style="position:absolute;left:20.30px;top:156.20px;font-size:15.20px;line-height:17px;color:#f2f2f2;white-space:nowrap;transform:scaleX(1.189);transform-origin:0 0;">Target Y</div><div style="position:absolute;left:148.30px;top:156.20px;font-size:15.20px;line-height:17px;color:#f2f2f2;white-space:nowrap;transform:scaleX(1.162);transform-origin:0 0;">429,0776</div><div style="position:absolute;left:235.00px;top:156.20px;font-size:15.20px;line-height:17px;color:#f2f2f2;white-space:nowrap;transform:scaleX(1.162);transform-origin:0 0;">339,5283</div><div style="position:absolute;left:321.60px;top:156.20px;font-size:15.20px;line-height:17px;color:#f2f2f2;white-space:nowrap;transform:scaleX(1.162);transform-origin:0 0;">273,5786</div><div style="position:absolute;left:408.30px;top:156.20px;font-size:15.20px;line-height:17px;color:#f2f2f2;white-space:nowrap;transform:scaleX(1.162);transform-origin:0 0;">210,6861</div><div style="position:absolute;left:495.00px;top:156.20px;font-size:15.20px;line-height:17px;color:#f2f2f2;white-space:nowrap;transform:scaleX(1.162);transform-origin:0 0;">146,7078</div><div style="position:absolute;left:582.00px;top:156.20px;font-size:15.20px;line-height:17px;color:#f2f2f2;white-space:nowrap;transform:scaleX(1.162);transform-origin:0 0;">0,0000</div><div style="position:absolute;left:648.70px;top:156.20px;font-size:15.20px;line-height:17px;color:#f2f2f2;white-space:nowrap;transform:scaleX(1.162);transform-origin:0 0;">43,2223</div><div style="position:absolute;left:729.40px;top:156.20px;font-size:15.20px;line-height:17px;color:#f2f2f2;white-space:nowrap;transform:scaleX(1.162);transform-origin:0 0;">149,7273</div><div style="position:absolute;left:816.10px;top:156.20px;font-size:15.20px;line-height:17px;color:#f2f2f2;white-space:nowrap;transform:scaleX(1.162);transform-origin:0 0;">80,2306</div><div style="position:absolute;left:892.80px;top:156.20px;font-size:15.20px;line-height:17px;color:#f2f2f2;white-space:nowrap;transform:scaleX(1.162);transform-origin:0 0;">55,9193</div><div style="position:absolute;left:969.00px;top:156.20px;font-size:15.20px;line-height:17px;color:#f2f2f2;white-space:nowrap;transform:scaleX(1.162);transform-origin:0 0;">100,0544</div><div style="position:absolute;left:1069.30px;top:156.20px;font-size:15.20px;line-height:17px;color:#f2f2f2;white-space:nowrap;transform:scaleX(1.162);transform-origin:0 0;">179,6677</div><div style="position:absolute;left:1176.50px;top:156.20px;font-size:15.20px;line-height:17px;color:#f2f2f2;white-space:nowrap;transform:scaleX(1.162);transform-origin:0 0;">121,6342</div><div style="position:absolute;left:1263.60px;top:156.20px;font-size:15.20px;line-height:17px;color:#f2f2f2;white-space:nowrap;transform:scaleX(1.162);transform-origin:0 0;">50,4321</div><div style="position:absolute;left:0;top:176.8px;width:100%;height:25.2px;background:#424242"></div><div style="position:absolute;left:0;top:176.8px;width:15.2px;height:25px;background:linear-gradient(#262626,#363636)"></div><div style="position:absolute;left:20.30px;top:181.08px;font-size:15.20px;line-height:17px;color:#f2f2f2;white-space:nowrap;transform:scaleX(1.163);transform-origin:0 0;">&#916;E 2000</div><div style="position:absolute;left:148.30px;top:181.08px;font-size:15.20px;line-height:17px;color:#f2f2f2;white-space:nowrap;transform:scaleX(1.162);transform-origin:0 0;">4,6782</div><div style="position:absolute;left:235.00px;top:181.08px;font-size:15.20px;line-height:17px;color:#f2f2f2;white-space:nowrap;transform:scaleX(1.162);transform-origin:0 0;">2,6130</div><div style="position:absolute;left:321.60px;top:181.08px;font-size:15.20px;line-height:17px;color:#f2f2f2;white-space:nowrap;transform:scaleX(1.162);transform-origin:0 0;">2,7456</div><div style="position:absolute;left:408.30px;top:181.08px;font-size:15.20px;line-height:17px;color:#f2f2f2;white-space:nowrap;transform:scaleX(1.162);transform-origin:0 0;">2,5305</div><div style="position:absolute;left:495.00px;top:181.08px;font-size:15.20px;line-height:17px;color:#f2f2f2;white-space:nowrap;transform:scaleX(1.162);transform-origin:0 0;">3,1914</div><div style="position:absolute;left:582.00px;top:181.08px;font-size:15.20px;line-height:17px;color:#f2f2f2;white-space:nowrap;transform:scaleX(1.162);transform-origin:0 0;">0,0356</div><div style="position:absolute;left:648.70px;top:181.08px;font-size:15.20px;line-height:17px;color:#f2f2f2;white-space:nowrap;transform:scaleX(1.162);transform-origin:0 0;">0,9488</div><div style="position:absolute;left:729.40px;top:181.08px;font-size:15.20px;line-height:17px;color:#f2f2f2;white-space:nowrap;transform:scaleX(1.162);transform-origin:0 0;">1,7135</div><div style="position:absolute;left:816.10px;top:181.08px;font-size:15.20px;line-height:17px;color:#f2f2f2;white-space:nowrap;transform:scaleX(1.162);transform-origin:0 0;">2,3780</div><div style="position:absolute;left:892.80px;top:181.08px;font-size:15.20px;line-height:17px;color:#f2f2f2;white-space:nowrap;transform:scaleX(1.162);transform-origin:0 0;">1,7411</div><div style="position:absolute;left:969.00px;top:181.08px;font-size:15.20px;line-height:17px;color:#f2f2f2;white-space:nowrap;transform:scaleX(1.162);transform-origin:0 0;">1,3115</div><div style="position:absolute;left:1069.30px;top:181.08px;font-size:15.20px;line-height:17px;color:#f2f2f2;white-space:nowrap;transform:scaleX(1.162);transform-origin:0 0;">0,9727</div><div style="position:absolute;left:1176.50px;top:181.08px;font-size:15.20px;line-height:17px;color:#f2f2f2;white-space:nowrap;transform:scaleX(1.162);transform-origin:0 0;">1,5836</div><div style="position:absolute;left:1263.60px;top:181.08px;font-size:15.20px;line-height:17px;color:#f2f2f2;white-space:nowrap;transform:scaleX(1.162);transform-origin:0 0;">0,7725</div></div>
<div style="position:absolute;left:348.20px;top:809.60px;width:1284.60px;height:15.60px;background:#5e5e5e;"></div>
<div style="position:absolute;left:349.60px;top:811.00px;width:15.80px;height:13.40px;background:#8a8a8a;border-radius:2px;"></div>
<svg style="position:absolute;left:352.5px;top:812.5px" width="9" height="10"><path d="M7.5 0.5V9.5L1 5z" fill="#333"/></svg>
<div style="position:absolute;left:369.00px;top:811.00px;width:561.00px;height:12.80px;background:#444;border-radius:6.4px;"></div>
<div style="position:absolute;left:1615.00px;top:810.60px;width:16.80px;height:13.50px;background:#8a8a8a;border-radius:2px;"></div>
<svg style="position:absolute;left:1619.5px;top:812.5px" width="9" height="10"><path d="M1.5 0.5V9.5L8 5z" fill="#333"/></svg>
<div style="position:absolute;left:0.00px;top:826.00px;width:1645.00px;height:73.00px;background:#2e2e2e;"></div>
<div style="position:absolute;left:-42.00px;top:830.50px;width:62.50px;height:60.70px;background:linear-gradient(#909090,#5a5a5a);border-radius:6px;border-top:1px solid #a4a4a4;border-left:1px solid #8a8a8a;"></div>
<div style="position:absolute;left:-35.70px;top:836.70px;width:50.00px;height:15.20px;background:#8a84c8;border-radius:4.5px;box-shadow:inset 1.5px -1.5px 1.5px rgba(0,0,0,0.22);"></div>
<div style="position:absolute;left:-31.05px;top:859.00px;font-size:12.60px;line-height:14px;color:#2c2c2c;white-space:nowrap;font-weight:bold;">Blue</div>
<div style="position:absolute;left:-31.05px;top:874.00px;font-size:12.60px;line-height:14px;color:#2c2c2c;white-space:nowrap;font-weight:bold;">Flower</div>
<div style="position:absolute;left:23.00px;top:830.50px;width:62.50px;height:60.70px;background:linear-gradient(#909090,#5a5a5a);border-radius:6px;border-top:1px solid #a4a4a4;border-left:1px solid #8a8a8a;"></div>
<div style="position:absolute;left:29.30px;top:836.70px;width:50.00px;height:15.20px;background:#66c8b0;border-radius:4.5px;box-shadow:inset 1.5px -1.5px 1.5px rgba(0,0,0,0.22);"></div>
<div style="position:absolute;left:35.00px;top:859.00px;font-size:12.60px;line-height:14px;color:#2c2c2c;white-space:nowrap;font-weight:bold;">Bluish</div>
<div style="position:absolute;left:35.00px;top:874.00px;font-size:12.60px;line-height:14px;color:#2c2c2c;white-space:nowrap;font-weight:bold;">Green</div>
<div style="position:absolute;left:88.00px;top:830.50px;width:62.50px;height:60.70px;background:linear-gradient(#909090,#5a5a5a);border-radius:6px;border-top:1px solid #a4a4a4;border-left:1px solid #8a8a8a;"></div>
<div style="position:absolute;left:94.30px;top:836.70px;width:50.00px;height:30.20px;background:#e07c28;border-radius:4.5px;box-shadow:inset 1.5px -1.5px 1.5px rgba(0,0,0,0.22);"></div>
<div style="position:absolute;left:97.20px;top:874.00px;font-size:12.60px;line-height:14px;color:#2c2c2c;white-space:nowrap;font-weight:bold;">Orange</div>
<div style="position:absolute;left:153.00px;top:830.50px;width:62.50px;height:60.70px;background:linear-gradient(#909090,#5a5a5a);border-radius:6px;border-top:1px solid #a4a4a4;border-left:1px solid #8a8a8a;"></div>
<div style="position:absolute;left:159.30px;top:836.70px;width:50.00px;height:15.20px;background:#4a5cb0;border-radius:4.5px;box-shadow:inset 1.5px -1.5px 1.5px rgba(0,0,0,0.22);"></div>
<div style="position:absolute;left:159.05px;top:859.00px;font-size:12.60px;line-height:14px;color:#2c2c2c;white-space:nowrap;font-weight:bold;">Purplish</div>
<div style="position:absolute;left:159.05px;top:874.00px;font-size:12.60px;line-height:14px;color:#2c2c2c;white-space:nowrap;font-weight:bold;">Blue</div>
<div style="position:absolute;left:218.00px;top:830.50px;width:62.50px;height:60.70px;background:linear-gradient(#909090,#5a5a5a);border-radius:6px;border-top:1px solid #a4a4a4;border-left:1px solid #8a8a8a;"></div>
<div style="position:absolute;left:224.30px;top:836.70px;width:50.00px;height:15.20px;background:#cc5464;border-radius:4.5px;box-shadow:inset 1.5px -1.5px 1.5px rgba(0,0,0,0.22);"></div>
<div style="position:absolute;left:221.25px;top:859.00px;font-size:12.60px;line-height:14px;color:#2c2c2c;white-space:nowrap;font-weight:bold;">Moderate</div>
<div style="position:absolute;left:221.25px;top:874.00px;font-size:12.60px;line-height:14px;color:#2c2c2c;white-space:nowrap;font-weight:bold;">Red</div>
<div style="position:absolute;left:283.00px;top:830.50px;width:62.50px;height:60.70px;background:linear-gradient(#909090,#5a5a5a);border-radius:6px;border-top:1px solid #a4a4a4;border-left:1px solid #8a8a8a;"></div>
<div style="position:absolute;left:289.30px;top:836.70px;width:50.00px;height:30.20px;background:#5e3c78;border-radius:4.5px;box-shadow:inset 1.5px -1.5px 1.5px rgba(0,0,0,0.22);"></div>
<div style="position:absolute;left:294.65px;top:874.00px;font-size:12.60px;line-height:14px;color:#2c2c2c;white-space:nowrap;font-weight:bold;">Purple</div>
<div style="position:absolute;left:348.00px;top:830.50px;width:62.50px;height:60.70px;background:linear-gradient(#909090,#5a5a5a);border-radius:6px;border-top:1px solid #a4a4a4;border-left:1px solid #8a8a8a;"></div>
<div style="position:absolute;left:354.30px;top:836.70px;width:50.00px;height:15.20px;background:#a8c840;border-radius:4.5px;box-shadow:inset 1.5px -1.5px 1.5px rgba(0,0,0,0.22);"></div>
<div style="position:absolute;left:359.64px;top:859.00px;font-size:12.60px;line-height:14px;color:#2c2c2c;white-space:nowrap;font-weight:bold;">Yellow</div>
<div style="position:absolute;left:359.64px;top:874.00px;font-size:12.60px;line-height:14px;color:#2c2c2c;white-space:nowrap;font-weight:bold;">Green</div>
<div style="position:absolute;left:413.00px;top:830.50px;width:62.50px;height:60.70px;background:linear-gradient(#909090,#5a5a5a);border-radius:6px;border-top:1px solid #a4a4a4;border-left:1px solid #8a8a8a;"></div>
<div style="position:absolute;left:419.30px;top:836.70px;width:50.00px;height:15.20px;background:#eca630;border-radius:4.5px;box-shadow:inset 1.5px -1.5px 1.5px rgba(0,0,0,0.22);"></div>
<div style="position:absolute;left:422.20px;top:859.00px;font-size:12.60px;line-height:14px;color:#2c2c2c;white-space:nowrap;font-weight:bold;">Orange</div>
<div style="position:absolute;left:422.20px;top:874.00px;font-size:12.60px;line-height:14px;color:#2c2c2c;white-space:nowrap;font-weight:bold;">Yellow</div>
<div style="position:absolute;left:478.00px;top:830.50px;width:62.50px;height:60.70px;background:linear-gradient(#909090,#5a5a5a);border-radius:6px;border-top:1px solid #a4a4a4;border-left:1px solid #8a8a8a;"></div>
<div style="position:absolute;left:484.30px;top:836.70px;width:50.00px;height:30.20px;background:#343c9c;border-radius:4.5px;box-shadow:inset 1.5px -1.5px 1.5px rgba(0,0,0,0.22);"></div>
<div style="position:absolute;left:495.60px;top:874.00px;font-size:12.60px;line-height:14px;color:#2c2c2c;white-space:nowrap;font-weight:bold;">Blue</div>
<div style="position:absolute;left:543.00px;top:830.50px;width:62.50px;height:60.70px;background:linear-gradient(#909090,#5a5a5a);border-radius:6px;border-top:1px solid #a4a4a4;border-left:1px solid #8a8a8a;"></div>
<div style="position:absolute;left:549.30px;top:836.70px;width:50.00px;height:30.20px;background:#48a048;border-radius:4.5px;box-shadow:inset 1.5px -1.5px 1.5px rgba(0,0,0,0.22);"></div>
<div style="position:absolute;left:556.04px;top:874.00px;font-size:12.60px;line-height:14px;color:#2c2c2c;white-space:nowrap;font-weight:bold;">Green</div>
<div style="position:absolute;left:608.00px;top:830.50px;width:62.50px;height:60.70px;background:linear-gradient(#909090,#5a5a5a);border-radius:6px;border-top:1px solid #a4a4a4;border-left:1px solid #8a8a8a;"></div>
<div style="position:absolute;left:614.30px;top:836.70px;width:50.00px;height:30.20px;background:#b83038;border-radius:4.5px;box-shadow:inset 1.5px -1.5px 1.5px rgba(0,0,0,0.22);"></div>
<div style="position:absolute;left:627.35px;top:874.00px;font-size:12.60px;line-height:14px;color:#2c2c2c;white-space:nowrap;font-weight:bold;">Red</div>
<div style="position:absolute;left:673.00px;top:830.50px;width:62.50px;height:60.70px;background:linear-gradient(#909090,#5a5a5a);border-radius:6px;border-top:1px solid #a4a4a4;border-left:1px solid #8a8a8a;"></div>
<div style="position:absolute;left:679.30px;top:836.70px;width:50.00px;height:30.20px;background:#f0c820;border-radius:4.5px;box-shadow:inset 1.5px -1.5px 1.5px rgba(0,0,0,0.22);"></div>
<div style="position:absolute;left:684.64px;top:874.00px;font-size:12.60px;line-height:14px;color:#2c2c2c;white-space:nowrap;font-weight:bold;">Yellow</div>
<div style="position:absolute;left:738.00px;top:830.50px;width:62.50px;height:60.70px;background:linear-gradient(#909090,#5a5a5a);border-radius:6px;border-top:1px solid #a4a4a4;border-left:1px solid #8a8a8a;"></div>
<div style="position:absolute;left:744.30px;top:836.70px;width:50.00px;height:30.20px;background:#c05498;border-radius:4.5px;box-shadow:inset 1.5px -1.5px 1.5px rgba(0,0,0,0.22);"></div>
<div style="position:absolute;left:743.70px;top:874.00px;font-size:12.60px;line-height:14px;color:#2c2c2c;white-space:nowrap;font-weight:bold;">Magenta</div>
<div style="position:absolute;left:803.00px;top:830.50px;width:62.50px;height:60.70px;background:linear-gradient(#909090,#5a5a5a);border-radius:6px;border-top:1px solid #a4a4a4;border-left:1px solid #8a8a8a;"></div>
<div style="position:absolute;left:809.30px;top:836.70px;width:50.00px;height:30.20px;background:#0890b4;border-radius:4.5px;box-shadow:inset 1.5px -1.5px 1.5px rgba(0,0,0,0.22);"></div>
<div style="position:absolute;left:818.85px;top:874.00px;font-size:12.60px;line-height:14px;color:#2c2c2c;white-space:nowrap;font-weight:bold;">Cyan</div>
<div style="position:absolute;left:868.00px;top:830.50px;width:62.50px;height:60.70px;background:linear-gradient(#909090,#5a5a5a);border-radius:6px;border-top:1px solid #a4a4a4;border-left:1px solid #8a8a8a;"></div>
<div style="position:absolute;left:874.30px;top:836.70px;width:50.00px;height:30.20px;background:#ff0000;border-radius:4.5px;box-shadow:inset 1.5px -1.5px 1.5px rgba(0,0,0,0.22);"></div>
<div style="position:absolute;left:869.49px;top:874.00px;font-size:12.60px;line-height:14px;color:#2c2c2c;white-space:nowrap;font-weight:bold;">100% Red</div>
<div style="position:absolute;left:933.00px;top:830.50px;width:62.50px;height:60.70px;background:linear-gradient(#909090,#5a5a5a);border-radius:6px;border-top:1px solid #a4a4a4;border-left:1px solid #8a8a8a;"></div>
<div style="position:absolute;left:939.30px;top:836.70px;width:50.00px;height:15.20px;background:#00ff00;border-radius:4.5px;box-shadow:inset 1.5px -1.5px 1.5px rgba(0,0,0,0.22);"></div>
<div style="position:absolute;left:946.04px;top:859.00px;font-size:12.60px;line-height:14px;color:#2c2c2c;white-space:nowrap;font-weight:bold;">100%</div>
<div style="position:absolute;left:946.04px;top:874.00px;font-size:12.60px;line-height:14px;color:#2c2c2c;white-space:nowrap;font-weight:bold;">Green</div>
<div style="position:absolute;left:998.00px;top:830.50px;width:62.50px;height:60.70px;background:linear-gradient(#909090,#5a5a5a);border-radius:6px;border-top:1px solid #a4a4a4;border-left:1px solid #8a8a8a;"></div>
<div style="position:absolute;left:1004.30px;top:836.70px;width:50.00px;height:15.20px;background:#0000ff;border-radius:4.5px;box-shadow:inset 1.5px -1.5px 1.5px rgba(0,0,0,0.22);"></div>
<div style="position:absolute;left:1013.14px;top:859.00px;font-size:12.60px;line-height:14px;color:#2c2c2c;white-space:nowrap;font-weight:bold;">100%</div>
<div style="position:absolute;left:1013.14px;top:874.00px;font-size:12.60px;line-height:14px;color:#2c2c2c;white-space:nowrap;font-weight:bold;">Blue</div>
<div style="position:absolute;left:1063.00px;top:830.50px;width:62.50px;height:60.70px;background:linear-gradient(#909090,#5a5a5a);border-radius:6px;border-top:1px solid #a4a4a4;border-left:1px solid #8a8a8a;"></div>
<div style="position:absolute;left:1069.30px;top:836.70px;width:50.00px;height:15.20px;background:#00ffff;border-radius:4.5px;box-shadow:inset 1.5px -1.5px 1.5px rgba(0,0,0,0.22);"></div>
<div style="position:absolute;left:1078.14px;top:859.00px;font-size:12.60px;line-height:14px;color:#2c2c2c;white-space:nowrap;font-weight:bold;">100%</div>
<div style="position:absolute;left:1078.14px;top:874.00px;font-size:12.60px;line-height:14px;color:#2c2c2c;white-space:nowrap;font-weight:bold;">Cyan</div>
<div style="position:absolute;left:1128.00px;top:830.50px;width:62.50px;height:60.70px;background:linear-gradient(#909090,#5a5a5a);border-radius:6px;border-top:1px solid #a4a4a4;border-left:1px solid #8a8a8a;"></div>
<div style="position:absolute;left:1134.30px;top:836.70px;width:50.00px;height:15.20px;background:#ff00ff;border-radius:4.5px;box-shadow:inset 1.5px -1.5px 1.5px rgba(0,0,0,0.22);"></div>
<div style="position:absolute;left:1133.70px;top:859.00px;font-size:12.60px;line-height:14px;color:#2c2c2c;white-space:nowrap;font-weight:bold;">100%</div>
<div style="position:absolute;left:1133.70px;top:874.00px;font-size:12.60px;line-height:14px;color:#2c2c2c;white-space:nowrap;font-weight:bold;">Magenta</div>
<div style="position:absolute;left:1193.00px;top:830.50px;width:62.50px;height:60.70px;background:linear-gradient(#1c1c1c,#3a3a3a);border-radius:6px;"></div>
<div style="position:absolute;left:1199.30px;top:836.70px;width:50.00px;height:15.20px;background:#ffff00;border-radius:4.5px;box-shadow:inset 1.5px -1.5px 1.5px rgba(0,0,0,0.22);"></div>
<div style="position:absolute;left:1204.64px;top:859.00px;font-size:12.60px;line-height:14px;color:#fff;white-space:nowrap;font-weight:bold;">100%</div>
<div style="position:absolute;left:1204.64px;top:874.00px;font-size:12.60px;line-height:14px;color:#fff;white-space:nowrap;font-weight:bold;">Yellow</div>
<div style="position:absolute;left:0.00px;top:891.20px;width:1257.00px;height:8.00px;background:#626262;"></div>
<div style="position:absolute;left:445.50px;top:892.80px;width:795.00px;height:8.00px;background:#4a4a4a;border-radius:5px 5px 0 0;"></div>
<div style="position:absolute;left:0.00px;top:892.00px;width:8.00px;height:8.00px;background:#8a8a8a;"></div>
<div style="position:absolute;left:1241.00px;top:892.00px;width:16.00px;height:8.00px;background:#8a8a8a;"></div>
<svg style="position:absolute;left:0;top:893px" width="8" height="6"><path d="M6.5 0V6H2.5L6.5 0z" fill="#333"/></svg>
<svg style="position:absolute;left:1244px;top:893px" width="9" height="6"><path d="M1.5 0L6.5 6H1.5z" fill="#333"/></svg>
<div style="position:absolute;left:1259.20px;top:830.70px;width:59.60px;height:22.70px;background:linear-gradient(#a4a4a4,#727272);border-radius:6px 5px 0 0;border-top:1px solid #b4b4b4;"></div>
<div style="position:absolute;left:1280.10px;top:832.90px;width:18.60px;height:18.60px;border-radius:50%;background:linear-gradient(#6e6e6e,#9c9c9c);"></div>
<svg style="position:absolute;left:1283.4px;top:838px" width="13" height="8"><path d="M0.5 6.2H11.7L6.1 0.9z" fill="#2e2e2e"/></svg>
<div style="position:absolute;left:1259.20px;top:854.40px;width:59.60px;height:45.00px;background:linear-gradient(#7c7c7c,#9a9a9a);border-top:1px solid #999;"></div>
<div style="position:absolute;left:1270.40px;top:861.30px;width:38.40px;height:42.00px;border:2.4px solid #222;border-radius:6px;background:linear-gradient(#cfcfcf 0%,#bdbdbd 50%,#8c8c8c 52%,#9a9a9a 100%);"></div>
<div style="position:absolute;left:1280.70px;top:871.60px;width:17.40px;height:17.00px;background:linear-gradient(#2a2a2a 0%,#1c1c1c 50%,#000 52%);"></div>
<div style="position:absolute;left:1320.10px;top:830.00px;width:57.90px;height:37.60px;background:linear-gradient(#aaa,#6e6e6e);border-left:1px solid #333;"></div>
<div style="position:absolute;left:1336.10px;top:836.30px;width:25.60px;height:25.60px;border-radius:50%;background:linear-gradient(#7a7a7a,#a6a6a6);"></div>
<svg style="position:absolute;left:1335.9px;top:836.1px;overflow:visible" width="26" height="26" viewBox="-13 -13 26 26"><rect x="-4.6" y="-4.6" width="9.2" height="9.2" fill="#2a2a2a"/></svg>
<div style="position:absolute;left:1378.00px;top:830.00px;width:56.40px;height:37.60px;background:linear-gradient(#aaa,#6e6e6e);border-left:1px solid #333;"></div>
<div style="position:absolute;left:1393.50px;top:836.30px;width:25.60px;height:25.60px;border-radius:50%;background:linear-gradient(#7a7a7a,#a6a6a6);"></div>
<svg style="position:absolute;left:1393.3px;top:836.1px;overflow:visible" width="26" height="26" viewBox="-13 -13 26 26"><path d="M-3.6 -5.6V5.6L6 0z" fill="#2a2a2a"/></svg>
<div style="position:absolute;left:1434.40px;top:830.00px;width:56.40px;height:37.60px;background:linear-gradient(#aaa,#6e6e6e);border-left:1px solid #333;"></div>
<div style="position:absolute;left:1449.70px;top:836.30px;width:25.60px;height:25.60px;border-radius:50%;background:linear-gradient(#7a7a7a,#a6a6a6);"></div>
<svg style="position:absolute;left:1449.5px;top:836.1px;overflow:visible" width="26" height="26" viewBox="-13 -13 26 26"><path d="M-4 -6.5H-6.5V6.5H-4M4 -6.5H6.5V6.5H4" fill="none" stroke="#2a2a2a" stroke-width="1.8"/><path d="M-3.4 0H3.4M-1.6 -1.8L-3.4 0L-1.6 1.8M1.6 -1.8L3.4 0L1.6 1.8" fill="none" stroke="#2a2a2a" stroke-width="1.1"/></svg>
<div style="position:absolute;left:1490.80px;top:830.00px;width:56.20px;height:37.60px;background:linear-gradient(#aaa,#6e6e6e);border-left:1px solid #333;"></div>
<div style="position:absolute;left:1506.30px;top:836.30px;width:25.60px;height:25.60px;border-radius:50%;background:linear-gradient(#7a7a7a,#a6a6a6);"></div>
<svg style="position:absolute;left:1506.1px;top:836.1px;overflow:visible" width="26" height="26" viewBox="-13 -13 26 26"><path d="M0 0C-2.2 -3.6 -7.6 -3.6 -7.6 0C-7.6 3.6 -2.2 3.6 0 0C2.2 -3.6 7.6 -3.6 7.6 0C7.6 3.6 2.2 3.6 0 0z" fill="none" stroke="#2a2a2a" stroke-width="2"/></svg>
<div style="position:absolute;left:1547.00px;top:830.00px;width:56.00px;height:37.60px;background:linear-gradient(#3e3e3e,#2c2c2c);border-left:1px solid #2a2a2a;"></div>
<div style="position:absolute;left:1562.10px;top:836.30px;width:25.60px;height:25.60px;border-radius:50%;background:linear-gradient(#303030,#3c3c3c);"></div>
<svg style="position:absolute;left:1561.9px;top:836.1px;overflow:visible" width="26" height="26" viewBox="-13 -13 26 26"><path d="M-5.6 -1.2A5.8 5.8 0 0 1 4.4 -3.8M5.6 1.2A5.8 5.8 0 0 1 -4.4 3.8" fill="none" stroke="#1e1e1e" stroke-width="2.6"/><path d="M2 -6.8L7 -6L5.6 -1z M-2 6.8L-7 6L-5.6 1z" fill="#1e1e1e"/></svg>
<div style="position:absolute;left:1603.00px;top:830.00px;width:57.00px;height:37.60px;background:linear-gradient(#3e3e3e,#2c2c2c);border-left:1px solid #2a2a2a;"></div>
<div style="position:absolute;left:1619.00px;top:836.30px;width:25.60px;height:25.60px;border-radius:50%;background:linear-gradient(#303030,#3c3c3c);"></div>
<div style="position:absolute;left:1320.20px;top:869.20px;width:170.60px;height:32.00px;background:linear-gradient(#b4b4b4,#8c8c8c);border-top:1px solid #c4c4c4;border-left:1px solid #999;border-radius:5px 0 0 0;"></div>
<div style="position:absolute;left:1492.00px;top:869.20px;width:160.00px;height:32.00px;background:linear-gradient(#b4b4b4,#8c8c8c);border-top:1px solid #c4c4c4;border-left:1px solid #999;"></div>
<div style="position:absolute;left:1347.30px;top:876.00px;width:23.20px;height:23.20px;border-radius:50%;background:linear-gradient(#8c8c8c,#b0b0b0);"></div>
<div style="position:absolute;left:1614.20px;top:876.00px;width:23.20px;height:23.20px;border-radius:50%;background:linear-gradient(#8c8c8c,#b0b0b0);"></div>
<svg style="position:absolute;left:1351.6px;top:880.6px" width="16" height="16"><path d="M6.6 1.6L2 7.4L6.6 13.2M12.6 1.6L8 7.4L12.6 13.2" fill="none" stroke="#333" stroke-width="2.3"/></svg>
<svg style="position:absolute;left:1618px;top:880.6px" width="16" height="16"><path d="M3.4 1.6L8 7.4L3.4 13.2M9.4 1.6L14 7.4L9.4 13.2" fill="none" stroke="#333" stroke-width="2.3"/></svg>
<div style="position:absolute;left:1393.30px;top:873.00px;font-size:29.50px;line-height:33px;color:#383838;white-space:nowrap;transform:scaleX(0.9454);transform-origin:0 0;text-shadow:0.5px 0 0 #383838,-0.3px 0 0 #383838;">Back</div>
<div style="position:absolute;left:1526.00px;top:873.00px;font-size:29.50px;line-height:33px;color:#383838;white-space:nowrap;transform:scaleX(1.0634);transform-origin:0 0;text-shadow:0.5px 0 0 #383838,-0.3px 0 0 #383838;">Next</div>
</body></html>
